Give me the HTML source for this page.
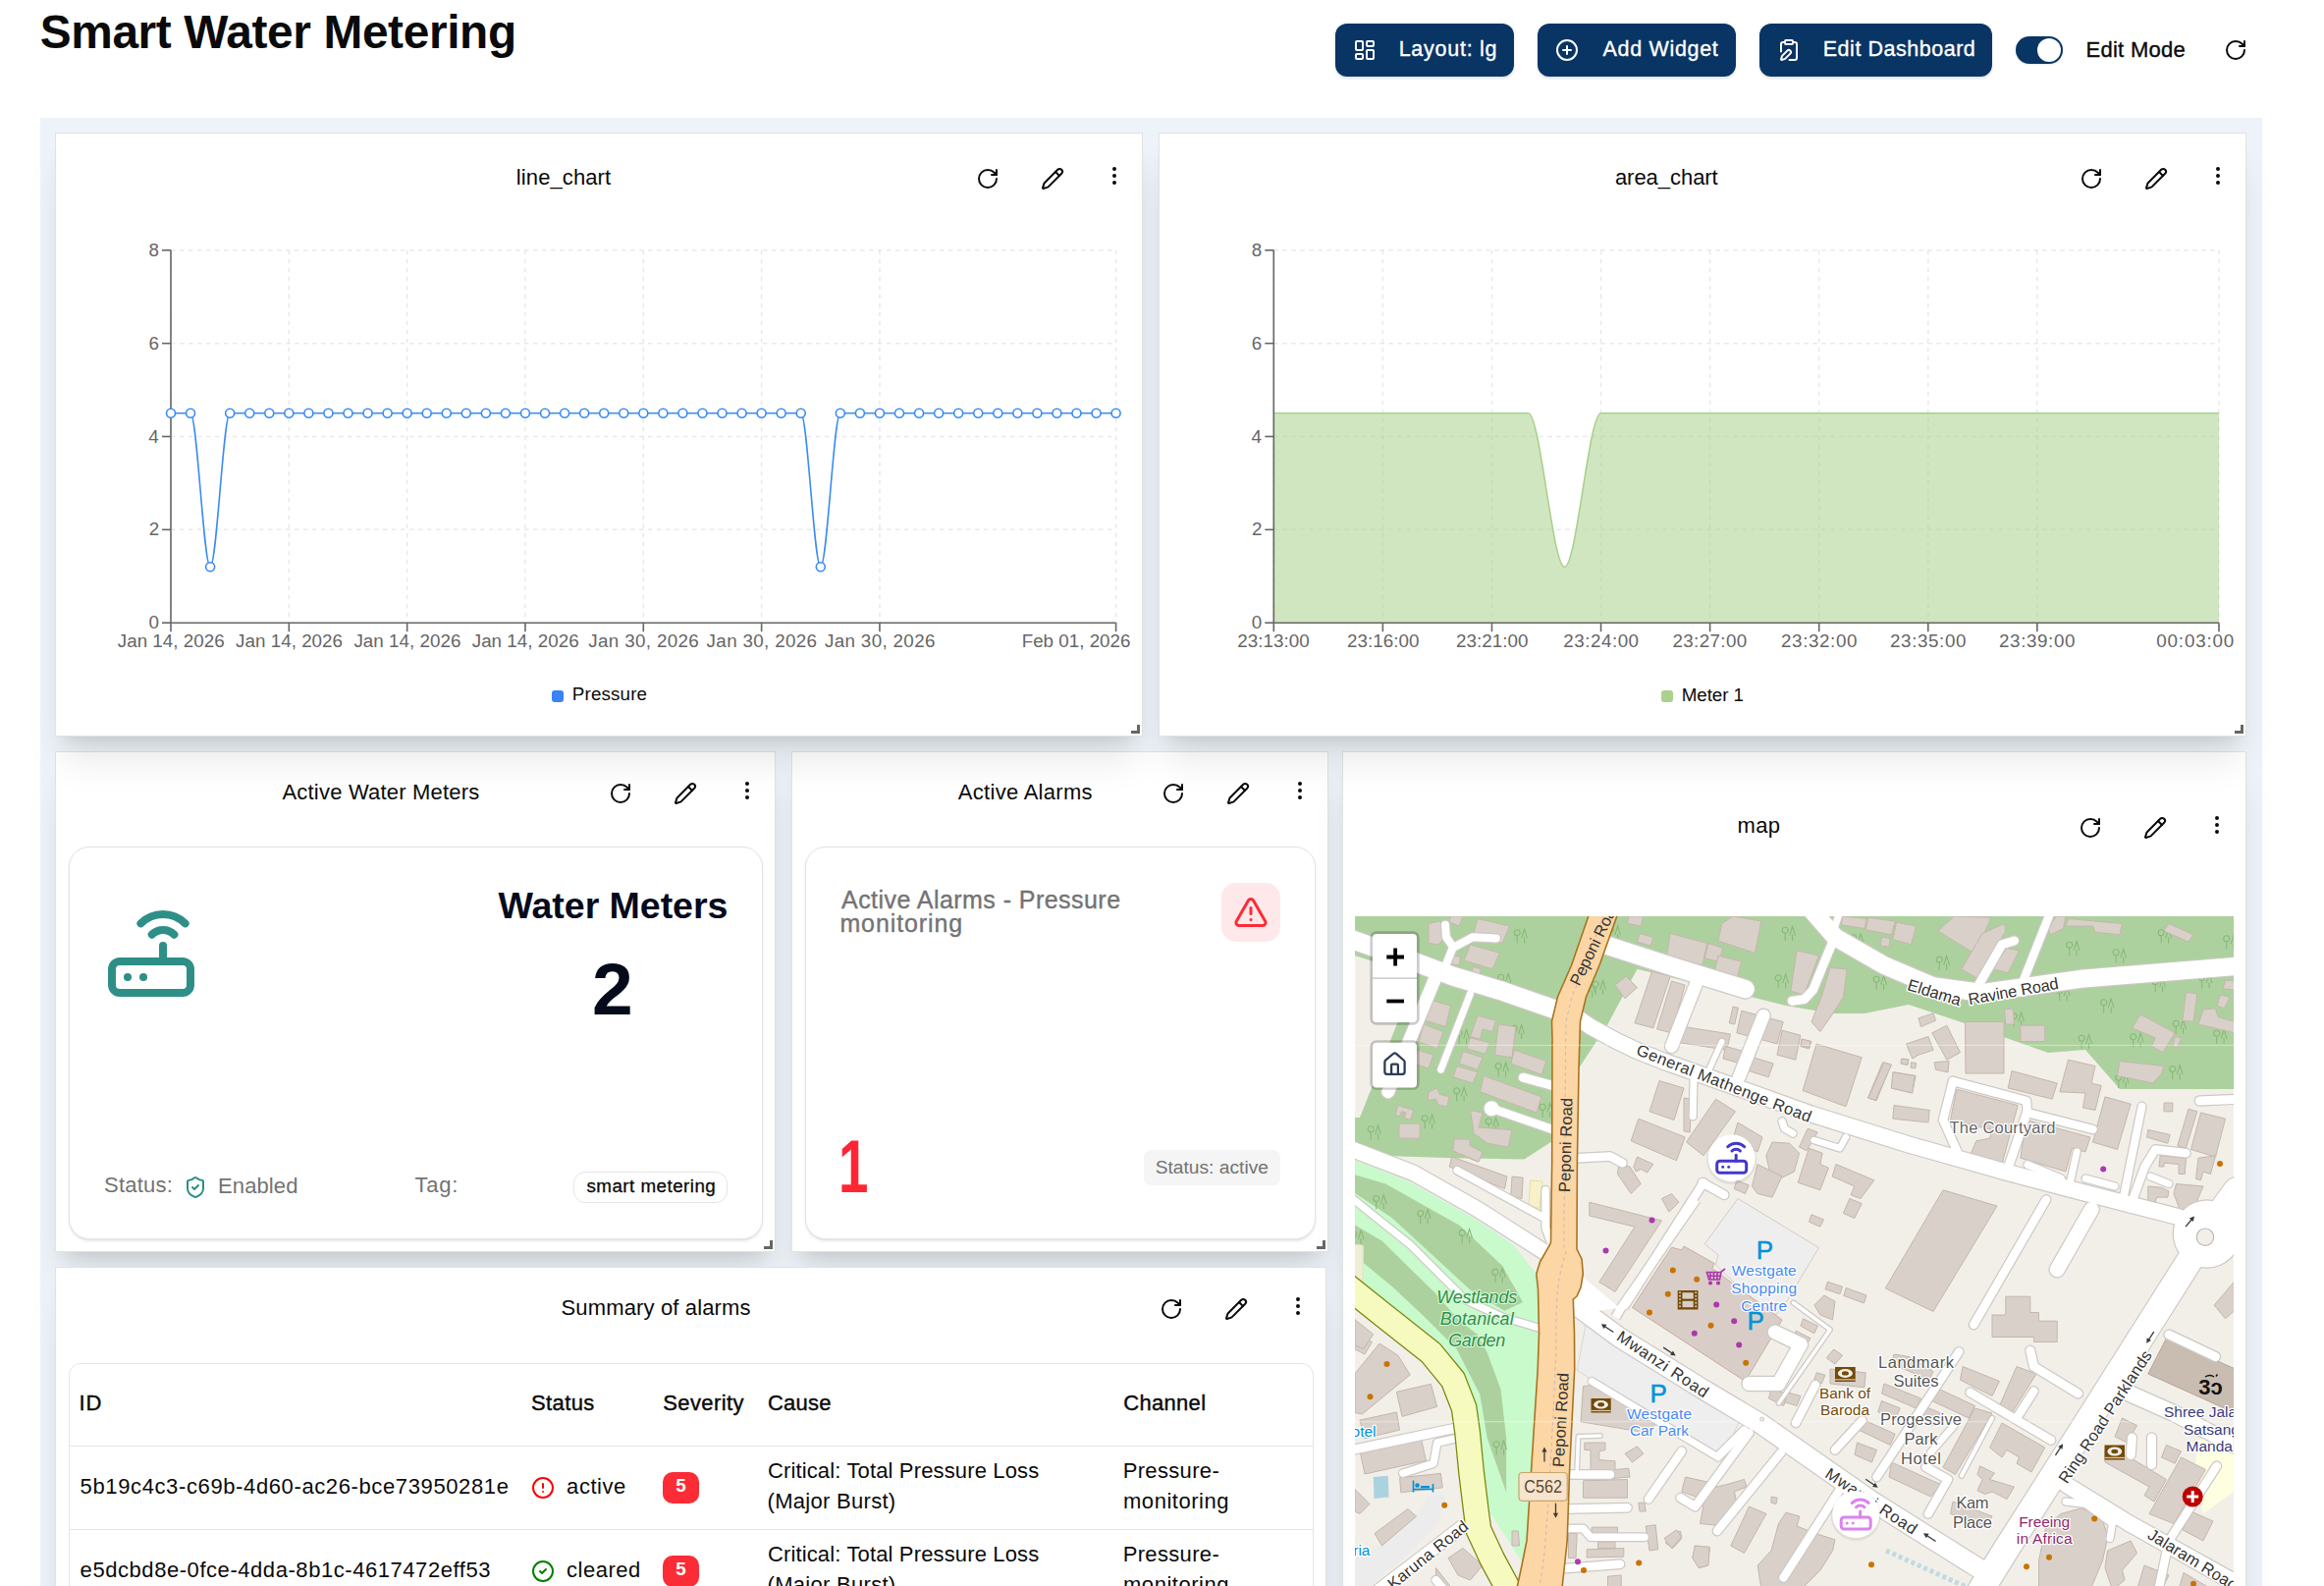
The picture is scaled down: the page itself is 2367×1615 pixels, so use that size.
<!DOCTYPE html>
<html lang="en"><head><meta charset="utf-8"><meta name="domain" content="Computer-Use"><title>Smart Water Metering</title>
<style>
html,body{margin:0;padding:0;background:#fff}
body{width:2367px;height:1615px;overflow:hidden;position:relative;font-family:"Liberation Sans", sans-serif;-webkit-font-smoothing:antialiased}
#root{position:absolute;left:0;top:0;width:2367px;height:1615px;overflow:hidden}
</style></head><body><div id="root">
<span style="position:absolute;left:40.72px;top:9.43px;font-size:47.8px;font-weight:700;font-style:normal;color:#0a0a0a;letter-spacing:-0.361px;white-space:pre;line-height:1;">Smart Water Metering</span>
<div style="position:absolute;left:1360.10px;top:24.00px;width:181.80px;height:54.00px;background:#093564;border-radius:12px;box-shadow:0 1.5px 3px rgba(0,0,0,.12)"></div>
<svg style="position:absolute;left:1378.00px;top:39.30px" width="24" height="24" viewBox="0 0 24 24" fill="none" stroke="#fff" stroke-width="2" stroke-linecap="round" stroke-linejoin="round"><rect width="7" height="9" x="3" y="3" rx="1"/><rect width="7" height="5" x="14" y="3" rx="1"/><rect width="7" height="9" x="14" y="12" rx="1"/><rect width="7" height="5" x="3" y="16" rx="1"/></svg>
<span style="position:absolute;left:1424.65px;top:40.40px;font-size:21.5px;font-weight:400;font-style:normal;color:#fff;letter-spacing:0.742px;white-space:pre;line-height:1;-webkit-text-stroke:0.35px #fff;">Layout: lg</span>
<div style="position:absolute;left:1566.20px;top:24.00px;width:201.60px;height:54.00px;background:#093564;border-radius:12px;box-shadow:0 1.5px 3px rgba(0,0,0,.12)"></div>
<svg style="position:absolute;left:1584.00px;top:39.30px" width="24" height="24" viewBox="0 0 24 24" fill="none" stroke="#fff" stroke-width="2" stroke-linecap="round" stroke-linejoin="round"><circle cx="12" cy="12" r="10"/><path d="M8 12h8"/><path d="M12 8v8"/></svg>
<span style="position:absolute;left:1632.50px;top:40.40px;font-size:21.5px;font-weight:400;font-style:normal;color:#fff;letter-spacing:0.689px;white-space:pre;line-height:1;-webkit-text-stroke:0.35px #fff;">Add Widget</span>
<div style="position:absolute;left:1792.10px;top:24.00px;width:236.70px;height:54.00px;background:#093564;border-radius:12px;box-shadow:0 1.5px 3px rgba(0,0,0,.12)"></div>
<svg style="position:absolute;left:1809.60px;top:39.30px" width="24" height="24" viewBox="0 0 24 24" fill="none" stroke="#fff" stroke-width="2" stroke-linecap="round" stroke-linejoin="round"><rect width="8" height="4" x="8" y="2" rx="1"/><path d="M16 4h2a2 2 0 0 1 2 2v14a2 2 0 0 1-2 2h-5.5"/><path d="M4 13.5V6a2 2 0 0 1 2-2h2"/><path d="M13.378 15.626a1 1 0 1 0-3.004-3.004l-5.01 5.012a2 2 0 0 0-.506.854l-.837 2.87a.5.5 0 0 0 .62.62l2.87-.837a2 2 0 0 0 .854-.506z"/></svg>
<span style="position:absolute;left:1856.75px;top:40.40px;font-size:21.5px;font-weight:400;font-style:normal;color:#fff;letter-spacing:0.529px;white-space:pre;line-height:1;-webkit-text-stroke:0.35px #fff;">Edit Dashboard</span>
<div style="position:absolute;left:2053.00px;top:37.20px;width:48.20px;height:27.60px;background:#093564;border-radius:14px;box-shadow:0 1px 2px rgba(0,0,0,.1)"></div>
<div style="position:absolute;left:2074.70px;top:38.60px;width:24.80px;height:24.80px;background:#fff;border-radius:50%"></div>
<span style="position:absolute;left:2124.45px;top:40.07px;font-size:22px;font-weight:400;font-style:normal;color:#0a0a0a;letter-spacing:0.291px;white-space:pre;line-height:1;-webkit-text-stroke:0.35px #0a0a0a;">Edit Mode</span>
<svg style="position:absolute;left:2265.00px;top:38.70px" width="24" height="24" viewBox="0 0 24 24" fill="none" stroke="#0a0a0a" stroke-width="2" stroke-linecap="round" stroke-linejoin="round"><path d="M21 12a9 9 0 1 1-9-9c2.52 0 4.93 1 6.74 2.74L21 8"/><path d="M21 3v5h-5"/></svg>
<div style="position:absolute;left:41.00px;top:120.00px;width:2263.00px;height:1600.00px;background:#edf3f8"></div>
<div style="position:absolute;left:56.00px;top:765.00px;width:734.40px;height:510.00px;background:#fff;border:1px solid #e2e2e2;box-sizing:border-box;box-shadow:0 30px 37.5px -7.5px rgba(0,0,0,.1),0 12px 15px -9px rgba(0,0,0,.1);"></div>
<div style="position:absolute;left:806.40px;top:765.00px;width:547.00px;height:510.00px;background:#fff;border:1px solid #e2e2e2;box-sizing:border-box;box-shadow:0 30px 37.5px -7.5px rgba(0,0,0,.1),0 12px 15px -9px rgba(0,0,0,.1);"></div>
<div style="position:absolute;left:1367.40px;top:765.00px;width:920.20px;height:935.00px;background:#fff;border:1px solid #e2e2e2;box-sizing:border-box;box-shadow:0 30px 37.5px -7.5px rgba(0,0,0,.1),0 12px 15px -9px rgba(0,0,0,.1);"></div>
<div style="position:absolute;left:56.00px;top:1290.40px;width:1295.40px;height:409.60px;background:#fff;border:1px solid #e2e2e2;box-sizing:border-box;box-shadow:0 30px 37.5px -7.5px rgba(0,0,0,.1),0 12px 15px -9px rgba(0,0,0,.1);"></div>
<div style="position:absolute;left:56.00px;top:135.00px;width:1108.40px;height:615.00px;background:#fff;border:1px solid #e2e2e2;box-sizing:border-box;box-shadow:0 30px 37.5px -7.5px rgba(0,0,0,.1),0 12px 15px -9px rgba(0,0,0,.1);"></div>
<div style="position:absolute;left:1180.00px;top:135.00px;width:1108.00px;height:615.00px;background:#fff;border:1px solid #e2e2e2;box-sizing:border-box;box-shadow:0 30px 37.5px -7.5px rgba(0,0,0,.1),0 12px 15px -9px rgba(0,0,0,.1);"></div>
<span style="position:absolute;left:525.80px;top:170.07px;font-size:22px;font-weight:400;font-style:normal;color:#0a0a0a;letter-spacing:0.106px;white-space:pre;line-height:1;">line_chart</span>
<svg style="position:absolute;left:994.10px;top:170.00px" width="24" height="24" viewBox="0 0 24 24" fill="none" stroke="#0a0a0a" stroke-width="2" stroke-linecap="round" stroke-linejoin="round"><path d="M21 12a9 9 0 1 1-9-9c2.52 0 4.93 1 6.74 2.74L21 8"/><path d="M21 3v5h-5"/></svg>
<svg style="position:absolute;left:1060.20px;top:170.00px" width="24" height="24" viewBox="0 0 24 24" fill="none" stroke="#0a0a0a" stroke-width="2" stroke-linecap="round" stroke-linejoin="round"><path d="M21.174 6.812a1 1 0 0 0-3.986-3.987L3.842 16.174a2 2 0 0 0-.5.83l-1.321 4.352a.5.5 0 0 0 .623.622l4.353-1.32a2 2 0 0 0 .83-.497z"/><path d="m15 5 4 4"/></svg>
<svg style="position:absolute;left:1123.10px;top:167.30px" width="24" height="24" viewBox="0 0 24 24" fill="none" stroke="#0a0a0a" stroke-width="2" stroke-linecap="round" stroke-linejoin="round"><circle cx="12" cy="12" r="1"/><circle cx="12" cy="5" r="1"/><circle cx="12" cy="19" r="1"/></svg>
<span style="position:absolute;left:1644.92px;top:170.07px;font-size:22px;font-weight:400;font-style:normal;color:#0a0a0a;letter-spacing:-0.039px;white-space:pre;line-height:1;">area_chart</span>
<svg style="position:absolute;left:2117.70px;top:170.00px" width="24" height="24" viewBox="0 0 24 24" fill="none" stroke="#0a0a0a" stroke-width="2" stroke-linecap="round" stroke-linejoin="round"><path d="M21 12a9 9 0 1 1-9-9c2.52 0 4.93 1 6.74 2.74L21 8"/><path d="M21 3v5h-5"/></svg>
<svg style="position:absolute;left:2183.80px;top:170.00px" width="24" height="24" viewBox="0 0 24 24" fill="none" stroke="#0a0a0a" stroke-width="2" stroke-linecap="round" stroke-linejoin="round"><path d="M21.174 6.812a1 1 0 0 0-3.986-3.987L3.842 16.174a2 2 0 0 0-.5.83l-1.321 4.352a.5.5 0 0 0 .623.622l4.353-1.32a2 2 0 0 0 .83-.497z"/><path d="m15 5 4 4"/></svg>
<svg style="position:absolute;left:2246.70px;top:167.30px" width="24" height="24" viewBox="0 0 24 24" fill="none" stroke="#0a0a0a" stroke-width="2" stroke-linecap="round" stroke-linejoin="round"><circle cx="12" cy="12" r="1"/><circle cx="12" cy="5" r="1"/><circle cx="12" cy="19" r="1"/></svg>
<span style="position:absolute;left:287.50px;top:796.27px;font-size:22px;font-weight:400;font-style:normal;color:#0a0a0a;letter-spacing:0.194px;white-space:pre;line-height:1;">Active Water Meters</span>
<svg style="position:absolute;left:620.10px;top:795.60px" width="24" height="24" viewBox="0 0 24 24" fill="none" stroke="#0a0a0a" stroke-width="2" stroke-linecap="round" stroke-linejoin="round"><path d="M21 12a9 9 0 1 1-9-9c2.52 0 4.93 1 6.74 2.74L21 8"/><path d="M21 3v5h-5"/></svg>
<svg style="position:absolute;left:686.20px;top:795.60px" width="24" height="24" viewBox="0 0 24 24" fill="none" stroke="#0a0a0a" stroke-width="2" stroke-linecap="round" stroke-linejoin="round"><path d="M21.174 6.812a1 1 0 0 0-3.986-3.987L3.842 16.174a2 2 0 0 0-.5.83l-1.321 4.352a.5.5 0 0 0 .623.622l4.353-1.32a2 2 0 0 0 .83-.497z"/><path d="m15 5 4 4"/></svg>
<svg style="position:absolute;left:749.10px;top:792.90px" width="24" height="24" viewBox="0 0 24 24" fill="none" stroke="#0a0a0a" stroke-width="2" stroke-linecap="round" stroke-linejoin="round"><circle cx="12" cy="12" r="1"/><circle cx="12" cy="5" r="1"/><circle cx="12" cy="19" r="1"/></svg>
<span style="position:absolute;left:975.80px;top:796.27px;font-size:22px;font-weight:400;font-style:normal;color:#0a0a0a;letter-spacing:0.292px;white-space:pre;line-height:1;">Active Alarms</span>
<svg style="position:absolute;left:1183.10px;top:795.60px" width="24" height="24" viewBox="0 0 24 24" fill="none" stroke="#0a0a0a" stroke-width="2" stroke-linecap="round" stroke-linejoin="round"><path d="M21 12a9 9 0 1 1-9-9c2.52 0 4.93 1 6.74 2.74L21 8"/><path d="M21 3v5h-5"/></svg>
<svg style="position:absolute;left:1249.20px;top:795.60px" width="24" height="24" viewBox="0 0 24 24" fill="none" stroke="#0a0a0a" stroke-width="2" stroke-linecap="round" stroke-linejoin="round"><path d="M21.174 6.812a1 1 0 0 0-3.986-3.987L3.842 16.174a2 2 0 0 0-.5.83l-1.321 4.352a.5.5 0 0 0 .623.622l4.353-1.32a2 2 0 0 0 .83-.497z"/><path d="m15 5 4 4"/></svg>
<svg style="position:absolute;left:1312.10px;top:792.90px" width="24" height="24" viewBox="0 0 24 24" fill="none" stroke="#0a0a0a" stroke-width="2" stroke-linecap="round" stroke-linejoin="round"><circle cx="12" cy="12" r="1"/><circle cx="12" cy="5" r="1"/><circle cx="12" cy="19" r="1"/></svg>
<span style="position:absolute;left:1769.42px;top:829.97px;font-size:22px;font-weight:400;font-style:normal;color:#0a0a0a;letter-spacing:0.438px;white-space:pre;line-height:1;">map</span>
<svg style="position:absolute;left:2117.30px;top:830.50px" width="24" height="24" viewBox="0 0 24 24" fill="none" stroke="#0a0a0a" stroke-width="2" stroke-linecap="round" stroke-linejoin="round"><path d="M21 12a9 9 0 1 1-9-9c2.52 0 4.93 1 6.74 2.74L21 8"/><path d="M21 3v5h-5"/></svg>
<svg style="position:absolute;left:2183.40px;top:830.50px" width="24" height="24" viewBox="0 0 24 24" fill="none" stroke="#0a0a0a" stroke-width="2" stroke-linecap="round" stroke-linejoin="round"><path d="M21.174 6.812a1 1 0 0 0-3.986-3.987L3.842 16.174a2 2 0 0 0-.5.83l-1.321 4.352a.5.5 0 0 0 .623.622l4.353-1.32a2 2 0 0 0 .83-.497z"/><path d="m15 5 4 4"/></svg>
<svg style="position:absolute;left:2246.30px;top:827.80px" width="24" height="24" viewBox="0 0 24 24" fill="none" stroke="#0a0a0a" stroke-width="2" stroke-linecap="round" stroke-linejoin="round"><circle cx="12" cy="12" r="1"/><circle cx="12" cy="5" r="1"/><circle cx="12" cy="19" r="1"/></svg>
<span style="position:absolute;left:571.50px;top:1321.27px;font-size:22px;font-weight:400;font-style:normal;color:#0a0a0a;letter-spacing:0.144px;white-space:pre;line-height:1;">Summary of alarms</span>
<svg style="position:absolute;left:1181.10px;top:1320.80px" width="24" height="24" viewBox="0 0 24 24" fill="none" stroke="#0a0a0a" stroke-width="2" stroke-linecap="round" stroke-linejoin="round"><path d="M21 12a9 9 0 1 1-9-9c2.52 0 4.93 1 6.74 2.74L21 8"/><path d="M21 3v5h-5"/></svg>
<svg style="position:absolute;left:1247.20px;top:1320.80px" width="24" height="24" viewBox="0 0 24 24" fill="none" stroke="#0a0a0a" stroke-width="2" stroke-linecap="round" stroke-linejoin="round"><path d="M21.174 6.812a1 1 0 0 0-3.986-3.987L3.842 16.174a2 2 0 0 0-.5.83l-1.321 4.352a.5.5 0 0 0 .623.622l4.353-1.32a2 2 0 0 0 .83-.497z"/><path d="m15 5 4 4"/></svg>
<svg style="position:absolute;left:1310.10px;top:1318.10px" width="24" height="24" viewBox="0 0 24 24" fill="none" stroke="#0a0a0a" stroke-width="2" stroke-linecap="round" stroke-linejoin="round"><circle cx="12" cy="12" r="1"/><circle cx="12" cy="5" r="1"/><circle cx="12" cy="19" r="1"/></svg>
<div style="position:absolute;left:1152.20px;top:737.80px;width:6.00px;height:6.00px;border-right:3px solid #666;border-bottom:3px solid #666"></div>
<div style="position:absolute;left:2275.80px;top:737.80px;width:6.00px;height:6.00px;border-right:3px solid #666;border-bottom:3px solid #666"></div>
<div style="position:absolute;left:778.20px;top:1262.80px;width:6.00px;height:6.00px;border-right:3px solid #666;border-bottom:3px solid #666"></div>
<div style="position:absolute;left:1341.20px;top:1262.80px;width:6.00px;height:6.00px;border-right:3px solid #666;border-bottom:3px solid #666"></div>
<svg style="position:absolute;left:0;top:0" width="2367" height="800" viewBox="0 0 2367 800" fill="none"><line x1="174.00" y1="539.35" x2="1136.60" y2="539.35" stroke="#e9e9e9" stroke-width="1.5" stroke-dasharray="4.5 4.5"/><line x1="174.00" y1="444.50" x2="1136.60" y2="444.50" stroke="#e9e9e9" stroke-width="1.5" stroke-dasharray="4.5 4.5"/><line x1="174.00" y1="349.65" x2="1136.60" y2="349.65" stroke="#e9e9e9" stroke-width="1.5" stroke-dasharray="4.5 4.5"/><line x1="174.00" y1="254.80" x2="1136.60" y2="254.80" stroke="#e9e9e9" stroke-width="1.5" stroke-dasharray="4.5 4.5"/><line x1="174.00" y1="254.80" x2="174.00" y2="634.20" stroke="#e9e9e9" stroke-width="1.5" stroke-dasharray="4.5 4.5"/><line x1="294.32" y1="254.80" x2="294.32" y2="634.20" stroke="#e9e9e9" stroke-width="1.5" stroke-dasharray="4.5 4.5"/><line x1="414.65" y1="254.80" x2="414.65" y2="634.20" stroke="#e9e9e9" stroke-width="1.5" stroke-dasharray="4.5 4.5"/><line x1="534.97" y1="254.80" x2="534.97" y2="634.20" stroke="#e9e9e9" stroke-width="1.5" stroke-dasharray="4.5 4.5"/><line x1="655.30" y1="254.80" x2="655.30" y2="634.20" stroke="#e9e9e9" stroke-width="1.5" stroke-dasharray="4.5 4.5"/><line x1="775.62" y1="254.80" x2="775.62" y2="634.20" stroke="#e9e9e9" stroke-width="1.5" stroke-dasharray="4.5 4.5"/><line x1="895.95" y1="254.80" x2="895.95" y2="634.20" stroke="#e9e9e9" stroke-width="1.5" stroke-dasharray="4.5 4.5"/><line x1="1136.60" y1="254.80" x2="1136.60" y2="634.20" stroke="#e9e9e9" stroke-width="1.5" stroke-dasharray="4.5 4.5"/><line x1="174.00" y1="254.80" x2="174.00" y2="634.20" stroke="#666" stroke-width="1.6"/><line x1="174.00" y1="634.20" x2="1136.60" y2="634.20" stroke="#666" stroke-width="1.6"/><line x1="165.00" y1="634.20" x2="174.00" y2="634.20" stroke="#666" stroke-width="1.6"/><line x1="165.00" y1="539.35" x2="174.00" y2="539.35" stroke="#666" stroke-width="1.6"/><line x1="165.00" y1="444.50" x2="174.00" y2="444.50" stroke="#666" stroke-width="1.6"/><line x1="165.00" y1="349.65" x2="174.00" y2="349.65" stroke="#666" stroke-width="1.6"/><line x1="165.00" y1="254.80" x2="174.00" y2="254.80" stroke="#666" stroke-width="1.6"/><line x1="174.00" y1="634.20" x2="174.00" y2="643.20" stroke="#666" stroke-width="1.6"/><line x1="294.32" y1="634.20" x2="294.32" y2="643.20" stroke="#666" stroke-width="1.6"/><line x1="414.65" y1="634.20" x2="414.65" y2="643.20" stroke="#666" stroke-width="1.6"/><line x1="534.97" y1="634.20" x2="534.97" y2="643.20" stroke="#666" stroke-width="1.6"/><line x1="655.30" y1="634.20" x2="655.30" y2="643.20" stroke="#666" stroke-width="1.6"/><line x1="775.62" y1="634.20" x2="775.62" y2="643.20" stroke="#666" stroke-width="1.6"/><line x1="895.95" y1="634.20" x2="895.95" y2="643.20" stroke="#666" stroke-width="1.6"/><line x1="1136.60" y1="634.20" x2="1136.60" y2="643.20" stroke="#666" stroke-width="1.6"/><path d="M174.00,420.79L194.05,420.79C200.74,420.79 207.42,577.29 214.11,577.29C220.79,577.29 227.48,420.79 234.16,420.79L254.22,420.79L274.27,420.79L294.32,420.79L314.38,420.79L334.43,420.79L354.49,420.79L374.54,420.79L394.60,420.79L414.65,420.79L434.70,420.79L454.76,420.79L474.81,420.79L494.87,420.79L514.92,420.79L534.97,420.79L555.03,420.79L575.08,420.79L595.14,420.79L615.19,420.79L635.25,420.79L655.30,420.79L675.35,420.79L695.41,420.79L715.46,420.79L735.52,420.79L755.57,420.79L775.62,420.79L795.68,420.79L815.73,420.79C822.42,420.79 829.10,577.29 835.79,577.29C842.47,577.29 849.16,420.79 855.84,420.79L875.90,420.79L895.95,420.79L916.00,420.79L936.06,420.79L956.11,420.79L976.17,420.79L996.22,420.79L1016.27,420.79L1036.33,420.79L1056.38,420.79L1076.44,420.79L1096.49,420.79L1116.55,420.79L1136.60,420.79" stroke="#3b8bf2" stroke-width="1.6"/><circle cx="174.00" cy="420.79" r="4.5" fill="#fff" stroke="#3b8bf2" stroke-width="1.6"/><circle cx="194.05" cy="420.79" r="4.5" fill="#fff" stroke="#3b8bf2" stroke-width="1.6"/><circle cx="214.11" cy="577.29" r="4.5" fill="#fff" stroke="#3b8bf2" stroke-width="1.6"/><circle cx="234.16" cy="420.79" r="4.5" fill="#fff" stroke="#3b8bf2" stroke-width="1.6"/><circle cx="254.22" cy="420.79" r="4.5" fill="#fff" stroke="#3b8bf2" stroke-width="1.6"/><circle cx="274.27" cy="420.79" r="4.5" fill="#fff" stroke="#3b8bf2" stroke-width="1.6"/><circle cx="294.32" cy="420.79" r="4.5" fill="#fff" stroke="#3b8bf2" stroke-width="1.6"/><circle cx="314.38" cy="420.79" r="4.5" fill="#fff" stroke="#3b8bf2" stroke-width="1.6"/><circle cx="334.43" cy="420.79" r="4.5" fill="#fff" stroke="#3b8bf2" stroke-width="1.6"/><circle cx="354.49" cy="420.79" r="4.5" fill="#fff" stroke="#3b8bf2" stroke-width="1.6"/><circle cx="374.54" cy="420.79" r="4.5" fill="#fff" stroke="#3b8bf2" stroke-width="1.6"/><circle cx="394.60" cy="420.79" r="4.5" fill="#fff" stroke="#3b8bf2" stroke-width="1.6"/><circle cx="414.65" cy="420.79" r="4.5" fill="#fff" stroke="#3b8bf2" stroke-width="1.6"/><circle cx="434.70" cy="420.79" r="4.5" fill="#fff" stroke="#3b8bf2" stroke-width="1.6"/><circle cx="454.76" cy="420.79" r="4.5" fill="#fff" stroke="#3b8bf2" stroke-width="1.6"/><circle cx="474.81" cy="420.79" r="4.5" fill="#fff" stroke="#3b8bf2" stroke-width="1.6"/><circle cx="494.87" cy="420.79" r="4.5" fill="#fff" stroke="#3b8bf2" stroke-width="1.6"/><circle cx="514.92" cy="420.79" r="4.5" fill="#fff" stroke="#3b8bf2" stroke-width="1.6"/><circle cx="534.97" cy="420.79" r="4.5" fill="#fff" stroke="#3b8bf2" stroke-width="1.6"/><circle cx="555.03" cy="420.79" r="4.5" fill="#fff" stroke="#3b8bf2" stroke-width="1.6"/><circle cx="575.08" cy="420.79" r="4.5" fill="#fff" stroke="#3b8bf2" stroke-width="1.6"/><circle cx="595.14" cy="420.79" r="4.5" fill="#fff" stroke="#3b8bf2" stroke-width="1.6"/><circle cx="615.19" cy="420.79" r="4.5" fill="#fff" stroke="#3b8bf2" stroke-width="1.6"/><circle cx="635.25" cy="420.79" r="4.5" fill="#fff" stroke="#3b8bf2" stroke-width="1.6"/><circle cx="655.30" cy="420.79" r="4.5" fill="#fff" stroke="#3b8bf2" stroke-width="1.6"/><circle cx="675.35" cy="420.79" r="4.5" fill="#fff" stroke="#3b8bf2" stroke-width="1.6"/><circle cx="695.41" cy="420.79" r="4.5" fill="#fff" stroke="#3b8bf2" stroke-width="1.6"/><circle cx="715.46" cy="420.79" r="4.5" fill="#fff" stroke="#3b8bf2" stroke-width="1.6"/><circle cx="735.52" cy="420.79" r="4.5" fill="#fff" stroke="#3b8bf2" stroke-width="1.6"/><circle cx="755.57" cy="420.79" r="4.5" fill="#fff" stroke="#3b8bf2" stroke-width="1.6"/><circle cx="775.62" cy="420.79" r="4.5" fill="#fff" stroke="#3b8bf2" stroke-width="1.6"/><circle cx="795.68" cy="420.79" r="4.5" fill="#fff" stroke="#3b8bf2" stroke-width="1.6"/><circle cx="815.73" cy="420.79" r="4.5" fill="#fff" stroke="#3b8bf2" stroke-width="1.6"/><circle cx="835.79" cy="577.29" r="4.5" fill="#fff" stroke="#3b8bf2" stroke-width="1.6"/><circle cx="855.84" cy="420.79" r="4.5" fill="#fff" stroke="#3b8bf2" stroke-width="1.6"/><circle cx="875.90" cy="420.79" r="4.5" fill="#fff" stroke="#3b8bf2" stroke-width="1.6"/><circle cx="895.95" cy="420.79" r="4.5" fill="#fff" stroke="#3b8bf2" stroke-width="1.6"/><circle cx="916.00" cy="420.79" r="4.5" fill="#fff" stroke="#3b8bf2" stroke-width="1.6"/><circle cx="936.06" cy="420.79" r="4.5" fill="#fff" stroke="#3b8bf2" stroke-width="1.6"/><circle cx="956.11" cy="420.79" r="4.5" fill="#fff" stroke="#3b8bf2" stroke-width="1.6"/><circle cx="976.17" cy="420.79" r="4.5" fill="#fff" stroke="#3b8bf2" stroke-width="1.6"/><circle cx="996.22" cy="420.79" r="4.5" fill="#fff" stroke="#3b8bf2" stroke-width="1.6"/><circle cx="1016.27" cy="420.79" r="4.5" fill="#fff" stroke="#3b8bf2" stroke-width="1.6"/><circle cx="1036.33" cy="420.79" r="4.5" fill="#fff" stroke="#3b8bf2" stroke-width="1.6"/><circle cx="1056.38" cy="420.79" r="4.5" fill="#fff" stroke="#3b8bf2" stroke-width="1.6"/><circle cx="1076.44" cy="420.79" r="4.5" fill="#fff" stroke="#3b8bf2" stroke-width="1.6"/><circle cx="1096.49" cy="420.79" r="4.5" fill="#fff" stroke="#3b8bf2" stroke-width="1.6"/><circle cx="1116.55" cy="420.79" r="4.5" fill="#fff" stroke="#3b8bf2" stroke-width="1.6"/><circle cx="1136.60" cy="420.79" r="4.5" fill="#fff" stroke="#3b8bf2" stroke-width="1.6"/><line x1="1297.30" y1="539.35" x2="2260.00" y2="539.35" stroke="#e9e9e9" stroke-width="1.5" stroke-dasharray="4.5 4.5"/><line x1="1297.30" y1="444.50" x2="2260.00" y2="444.50" stroke="#e9e9e9" stroke-width="1.5" stroke-dasharray="4.5 4.5"/><line x1="1297.30" y1="349.65" x2="2260.00" y2="349.65" stroke="#e9e9e9" stroke-width="1.5" stroke-dasharray="4.5 4.5"/><line x1="1297.30" y1="254.80" x2="2260.00" y2="254.80" stroke="#e9e9e9" stroke-width="1.5" stroke-dasharray="4.5 4.5"/><line x1="1297.30" y1="254.80" x2="1297.30" y2="634.20" stroke="#e9e9e9" stroke-width="1.5" stroke-dasharray="4.5 4.5"/><line x1="1408.38" y1="254.80" x2="1408.38" y2="634.20" stroke="#e9e9e9" stroke-width="1.5" stroke-dasharray="4.5 4.5"/><line x1="1519.46" y1="254.80" x2="1519.46" y2="634.20" stroke="#e9e9e9" stroke-width="1.5" stroke-dasharray="4.5 4.5"/><line x1="1630.54" y1="254.80" x2="1630.54" y2="634.20" stroke="#e9e9e9" stroke-width="1.5" stroke-dasharray="4.5 4.5"/><line x1="1741.62" y1="254.80" x2="1741.62" y2="634.20" stroke="#e9e9e9" stroke-width="1.5" stroke-dasharray="4.5 4.5"/><line x1="1852.70" y1="254.80" x2="1852.70" y2="634.20" stroke="#e9e9e9" stroke-width="1.5" stroke-dasharray="4.5 4.5"/><line x1="1963.78" y1="254.80" x2="1963.78" y2="634.20" stroke="#e9e9e9" stroke-width="1.5" stroke-dasharray="4.5 4.5"/><line x1="2074.87" y1="254.80" x2="2074.87" y2="634.20" stroke="#e9e9e9" stroke-width="1.5" stroke-dasharray="4.5 4.5"/><line x1="2260.00" y1="254.80" x2="2260.00" y2="634.20" stroke="#e9e9e9" stroke-width="1.5" stroke-dasharray="4.5 4.5"/><path d="M1297.30,420.79L1334.33,420.79L1371.35,420.79L1408.38,420.79L1445.41,420.79L1482.43,420.79L1519.46,420.79L1556.49,420.79C1568.83,420.79 1581.17,577.29 1593.52,577.29C1605.86,577.29 1618.20,420.79 1630.54,420.79L1667.57,420.79L1704.60,420.79L1741.62,420.79L1778.65,420.79L1815.68,420.79L1852.70,420.79L1889.73,420.79L1926.76,420.79L1963.78,420.79L2000.81,420.79L2037.84,420.79L2074.87,420.79L2111.89,420.79L2148.92,420.79L2185.95,420.79L2222.97,420.79L2260.00,420.79L2260.00,634.20L1297.30,634.20Z" fill="#a9d18e" fill-opacity="0.55"/><path d="M1297.30,420.79L1334.33,420.79L1371.35,420.79L1408.38,420.79L1445.41,420.79L1482.43,420.79L1519.46,420.79L1556.49,420.79C1568.83,420.79 1581.17,577.29 1593.52,577.29C1605.86,577.29 1618.20,420.79 1630.54,420.79L1667.57,420.79L1704.60,420.79L1741.62,420.79L1778.65,420.79L1815.68,420.79L1852.70,420.79L1889.73,420.79L1926.76,420.79L1963.78,420.79L2000.81,420.79L2037.84,420.79L2074.87,420.79L2111.89,420.79L2148.92,420.79L2185.95,420.79L2222.97,420.79L2260.00,420.79" stroke="#a9d18e" stroke-width="1.6"/><line x1="1297.30" y1="254.80" x2="1297.30" y2="634.20" stroke="#666" stroke-width="1.6"/><line x1="1297.30" y1="634.20" x2="2260.00" y2="634.20" stroke="#666" stroke-width="1.6"/><line x1="1288.30" y1="634.20" x2="1297.30" y2="634.20" stroke="#666" stroke-width="1.6"/><line x1="1288.30" y1="539.35" x2="1297.30" y2="539.35" stroke="#666" stroke-width="1.6"/><line x1="1288.30" y1="444.50" x2="1297.30" y2="444.50" stroke="#666" stroke-width="1.6"/><line x1="1288.30" y1="349.65" x2="1297.30" y2="349.65" stroke="#666" stroke-width="1.6"/><line x1="1288.30" y1="254.80" x2="1297.30" y2="254.80" stroke="#666" stroke-width="1.6"/><line x1="1297.30" y1="634.20" x2="1297.30" y2="643.20" stroke="#666" stroke-width="1.6"/><line x1="1408.38" y1="634.20" x2="1408.38" y2="643.20" stroke="#666" stroke-width="1.6"/><line x1="1519.46" y1="634.20" x2="1519.46" y2="643.20" stroke="#666" stroke-width="1.6"/><line x1="1630.54" y1="634.20" x2="1630.54" y2="643.20" stroke="#666" stroke-width="1.6"/><line x1="1741.62" y1="634.20" x2="1741.62" y2="643.20" stroke="#666" stroke-width="1.6"/><line x1="1852.70" y1="634.20" x2="1852.70" y2="643.20" stroke="#666" stroke-width="1.6"/><line x1="1963.78" y1="634.20" x2="1963.78" y2="643.20" stroke="#666" stroke-width="1.6"/><line x1="2074.87" y1="634.20" x2="2074.87" y2="643.20" stroke="#666" stroke-width="1.6"/><line x1="2260.00" y1="634.20" x2="2260.00" y2="643.20" stroke="#666" stroke-width="1.6"/></svg>
<span style="position:absolute;left:151.42px;top:625.28px;font-size:18.8px;font-weight:400;font-style:normal;color:#666;letter-spacing:0.000px;white-space:pre;line-height:1;">0</span>
<span style="position:absolute;left:1274.72px;top:625.28px;font-size:18.8px;font-weight:400;font-style:normal;color:#666;letter-spacing:0.000px;white-space:pre;line-height:1;">0</span>
<span style="position:absolute;left:151.67px;top:530.43px;font-size:18.8px;font-weight:400;font-style:normal;color:#666;letter-spacing:0.000px;white-space:pre;line-height:1;">2</span>
<span style="position:absolute;left:1274.97px;top:530.43px;font-size:18.8px;font-weight:400;font-style:normal;color:#666;letter-spacing:0.000px;white-space:pre;line-height:1;">2</span>
<span style="position:absolute;left:151.30px;top:435.58px;font-size:18.8px;font-weight:400;font-style:normal;color:#666;letter-spacing:0.000px;white-space:pre;line-height:1;">4</span>
<span style="position:absolute;left:1274.60px;top:435.58px;font-size:18.8px;font-weight:400;font-style:normal;color:#666;letter-spacing:0.000px;white-space:pre;line-height:1;">4</span>
<span style="position:absolute;left:151.55px;top:340.73px;font-size:18.8px;font-weight:400;font-style:normal;color:#666;letter-spacing:0.000px;white-space:pre;line-height:1;">6</span>
<span style="position:absolute;left:1274.85px;top:340.73px;font-size:18.8px;font-weight:400;font-style:normal;color:#666;letter-spacing:0.000px;white-space:pre;line-height:1;">6</span>
<span style="position:absolute;left:151.55px;top:245.88px;font-size:18.8px;font-weight:400;font-style:normal;color:#666;letter-spacing:0.000px;white-space:pre;line-height:1;">8</span>
<span style="position:absolute;left:1274.85px;top:245.88px;font-size:18.8px;font-weight:400;font-style:normal;color:#666;letter-spacing:0.000px;white-space:pre;line-height:1;">8</span>
<span style="position:absolute;left:119.75px;top:643.58px;font-size:18.8px;font-weight:400;font-style:normal;color:#666;letter-spacing:0.031px;white-space:pre;line-height:1;">Jan 14, 2026</span>
<span style="position:absolute;left:240.07px;top:643.58px;font-size:18.8px;font-weight:400;font-style:normal;color:#666;letter-spacing:0.031px;white-space:pre;line-height:1;">Jan 14, 2026</span>
<span style="position:absolute;left:360.40px;top:643.58px;font-size:18.8px;font-weight:400;font-style:normal;color:#666;letter-spacing:0.031px;white-space:pre;line-height:1;">Jan 14, 2026</span>
<span style="position:absolute;left:480.72px;top:643.58px;font-size:18.8px;font-weight:400;font-style:normal;color:#666;letter-spacing:0.031px;white-space:pre;line-height:1;">Jan 14, 2026</span>
<span style="position:absolute;left:599.30px;top:643.58px;font-size:18.8px;font-weight:400;font-style:normal;color:#666;letter-spacing:0.349px;white-space:pre;line-height:1;">Jan 30, 2026</span>
<span style="position:absolute;left:719.62px;top:643.58px;font-size:18.8px;font-weight:400;font-style:normal;color:#666;letter-spacing:0.349px;white-space:pre;line-height:1;">Jan 30, 2026</span>
<span style="position:absolute;left:839.95px;top:643.58px;font-size:18.8px;font-weight:400;font-style:normal;color:#666;letter-spacing:0.349px;white-space:pre;line-height:1;">Jan 30, 2026</span>
<span style="position:absolute;left:1040.70px;top:643.58px;font-size:18.8px;font-weight:400;font-style:normal;color:#666;letter-spacing:0.006px;white-space:pre;line-height:1;">Feb 01, 2026</span>
<span style="position:absolute;left:1260.32px;top:643.58px;font-size:18.8px;font-weight:400;font-style:normal;color:#666;letter-spacing:0.034px;white-space:pre;line-height:1;">23:13:00</span>
<span style="position:absolute;left:1372.02px;top:643.58px;font-size:18.8px;font-weight:400;font-style:normal;color:#666;letter-spacing:0.034px;white-space:pre;line-height:1;">23:16:00</span>
<span style="position:absolute;left:1483.02px;top:643.58px;font-size:18.8px;font-weight:400;font-style:normal;color:#666;letter-spacing:0.034px;white-space:pre;line-height:1;">23:21:00</span>
<span style="position:absolute;left:1592.32px;top:643.58px;font-size:18.8px;font-weight:400;font-style:normal;color:#666;letter-spacing:0.519px;white-space:pre;line-height:1;">23:24:00</span>
<span style="position:absolute;left:1703.42px;top:643.58px;font-size:18.8px;font-weight:400;font-style:normal;color:#666;letter-spacing:0.391px;white-space:pre;line-height:1;">23:27:00</span>
<span style="position:absolute;left:1814.02px;top:643.58px;font-size:18.8px;font-weight:400;font-style:normal;color:#666;letter-spacing:0.619px;white-space:pre;line-height:1;">23:32:00</span>
<span style="position:absolute;left:1925.02px;top:643.58px;font-size:18.8px;font-weight:400;font-style:normal;color:#666;letter-spacing:0.619px;white-space:pre;line-height:1;">23:35:00</span>
<span style="position:absolute;left:2036.02px;top:643.58px;font-size:18.8px;font-weight:400;font-style:normal;color:#666;letter-spacing:0.619px;white-space:pre;line-height:1;">23:39:00</span>
<span style="position:absolute;left:2196.35px;top:643.58px;font-size:18.8px;font-weight:400;font-style:normal;color:#666;letter-spacing:0.816px;white-space:pre;line-height:1;">00:03:00</span>
<div style="position:absolute;left:562.00px;top:702.90px;width:12.00px;height:12.00px;background:#3b82f6;border-radius:3px"></div>
<span style="position:absolute;left:582.80px;top:698.48px;font-size:18.8px;font-weight:400;font-style:normal;color:#0a0a0a;letter-spacing:0.151px;white-space:pre;line-height:1;">Pressure</span>
<div style="position:absolute;left:1692.40px;top:703.00px;width:12.00px;height:12.00px;background:#abd18f;border-radius:3px"></div>
<span style="position:absolute;left:1712.80px;top:698.58px;font-size:18.8px;font-weight:400;font-style:normal;color:#0a0a0a;letter-spacing:-0.098px;white-space:pre;line-height:1;">Meter 1</span>
<div style="position:absolute;left:69.60px;top:862.40px;width:707.60px;height:399.20px;background:#fff;border:1px solid #e5e5e5;border-radius:21px;box-sizing:border-box;box-shadow:0 1.5px 3px rgba(0,0,0,.09),0 1px 2px -1px rgba(0,0,0,.08)"></div>
<svg style="position:absolute;left:106.00px;top:923.00px" width="96" height="96" viewBox="0 0 24 24" fill="none" stroke="#2e8f87" stroke-width="2" stroke-linecap="round" stroke-linejoin="round"><rect width="20" height="8" x="2" y="14" rx="2"/><path d="M6.01 18H6"/><path d="M10.01 18H10"/><path d="M15 10v4"/><path d="M17.84 7.17a4 4 0 0 0-5.66 0"/><path d="M20.66 4.34a8 8 0 0 0-11.31 0"/></svg>
<span style="position:absolute;left:507.50px;top:904.26px;font-size:37.6px;font-weight:700;font-style:normal;color:#060b1c;letter-spacing:-0.065px;white-space:pre;line-height:1;-webkit-text-stroke:0px;">Water Meters</span>
<span style="position:absolute;left:603.06px;top:969.60px;font-size:75px;font-weight:700;font-style:normal;color:#060b1c;letter-spacing:0.000px;white-space:pre;line-height:1;">2</span>
<span style="position:absolute;left:106.00px;top:1195.77px;font-size:22px;font-weight:400;font-style:normal;color:#737373;letter-spacing:0.217px;white-space:pre;line-height:1;">Status:</span>
<svg style="position:absolute;left:187.00px;top:1197.00px" width="24" height="24" viewBox="0 0 24 24" fill="none" stroke="#2e8f87" stroke-width="2" stroke-linecap="round" stroke-linejoin="round"><path d="M20 13c0 5-3.5 7.5-7.66 8.95a1 1 0 0 1-.67-.01C7.5 20.5 4 18 4 13V6a1 1 0 0 1 1-1c2 0 4.5-1.2 6.24-2.72a1.17 1.17 0 0 1 1.52 0C14.51 3.81 17 5 19 5a1 1 0 0 1 1 1z"/><path d="m9 12 2 2 4-4"/></svg>
<span style="position:absolute;left:222.05px;top:1196.97px;font-size:22px;font-weight:400;font-style:normal;color:#737373;letter-spacing:0.096px;white-space:pre;line-height:1;">Enabled</span>
<span style="position:absolute;left:422.50px;top:1195.77px;font-size:22px;font-weight:400;font-style:normal;color:#737373;letter-spacing:0.725px;white-space:pre;line-height:1;">Tag:</span>
<div style="position:absolute;left:584.20px;top:1193.00px;width:156.60px;height:31.90px;border:1px solid #e5e5e5;border-radius:12px;box-sizing:border-box;background:#fff"></div>
<span style="position:absolute;left:597.50px;top:1198.58px;font-size:18.8px;font-weight:400;font-style:normal;color:#0a0a0a;letter-spacing:0.461px;white-space:pre;line-height:1;-webkit-text-stroke:0.3px #0a0a0a;">smart metering</span>
<div style="position:absolute;left:819.80px;top:862.40px;width:520.60px;height:399.20px;background:#fff;border:1px solid #e5e5e5;border-radius:21px;box-sizing:border-box;box-shadow:0 1.5px 3px rgba(0,0,0,.09),0 1px 2px -1px rgba(0,0,0,.08)"></div>
<span style="position:absolute;left:857.00px;top:904.43px;font-size:25px;font-weight:400;font-style:normal;color:#737373;letter-spacing:0.451px;white-space:pre;line-height:1;-webkit-text-stroke:0.35px #737373;">Active Alarms - Pressure</span>
<span style="position:absolute;left:855.38px;top:928.23px;font-size:25px;font-weight:400;font-style:normal;color:#737373;letter-spacing:0.908px;white-space:pre;line-height:1;-webkit-text-stroke:0.35px #737373;">monitoring</span>
<div style="position:absolute;left:1244.20px;top:899.20px;width:59.60px;height:59.60px;background:#ffe8ea;border-radius:15px"></div>
<svg style="position:absolute;left:1256.00px;top:911.00px" width="36" height="36" viewBox="0 0 24 24" fill="none" stroke="#fb2c36" stroke-width="2" stroke-linecap="round" stroke-linejoin="round"><path d="m21.73 18-8-14a2 2 0 0 0-3.48 0l-8 14A2 2 0 0 0 4 21h16a2 2 0 0 0 1.73-3"/><path d="M12 9v4"/><path d="M12 17h.01"/></svg>
<span style="position:absolute;left:853.25px;top:1150.05px;font-size:76px;font-weight:700;font-style:normal;color:#ff2533;letter-spacing:0.000px;white-space:pre;line-height:1;transform:scaleX(0.72);transform-origin:4px 0;">1</span>
<div style="position:absolute;left:1165.00px;top:1171.20px;width:138.80px;height:35.60px;background:#f5f5f5;border-radius:7px"></div>
<span style="position:absolute;left:1176.63px;top:1178.64px;font-size:19.2px;font-weight:400;font-style:normal;color:#737373;letter-spacing:0.017px;white-space:pre;line-height:1;">Status: active</span>
<div style="position:absolute;left:69.50px;top:1387.50px;width:1268.90px;height:400.00px;border:1px solid #e5e5e5;border-radius:12px;box-sizing:border-box;background:#fff"></div>
<div style="position:absolute;left:70.00px;top:1472.00px;width:1268.00px;height:1.00px;background:#e5e5e5"></div>
<div style="position:absolute;left:70.00px;top:1557.00px;width:1268.00px;height:1.00px;background:#e5e5e5"></div>
<span style="position:absolute;left:80.50px;top:1418.27px;font-size:22px;font-weight:400;font-style:normal;color:#0a0a0a;letter-spacing:1.000px;white-space:pre;line-height:1;-webkit-text-stroke:0.4px #0a0a0a;">ID</span>
<span style="position:absolute;left:541.00px;top:1418.27px;font-size:22px;font-weight:400;font-style:normal;color:#0a0a0a;letter-spacing:0.375px;white-space:pre;line-height:1;-webkit-text-stroke:0.4px #0a0a0a;">Status</span>
<span style="position:absolute;left:675.30px;top:1418.27px;font-size:22px;font-weight:400;font-style:normal;color:#0a0a0a;letter-spacing:0.386px;white-space:pre;line-height:1;-webkit-text-stroke:0.4px #0a0a0a;">Severity</span>
<span style="position:absolute;left:781.88px;top:1418.27px;font-size:22px;font-weight:400;font-style:normal;color:#0a0a0a;letter-spacing:0.250px;white-space:pre;line-height:1;-webkit-text-stroke:0.4px #0a0a0a;">Cause</span>
<span style="position:absolute;left:1144.28px;top:1418.27px;font-size:22px;font-weight:400;font-style:normal;color:#0a0a0a;letter-spacing:0.300px;white-space:pre;line-height:1;-webkit-text-stroke:0.4px #0a0a0a;">Channel</span>
<span style="position:absolute;left:81.62px;top:1503.27px;font-size:22px;font-weight:400;font-style:normal;color:#0a0a0a;letter-spacing:0.618px;white-space:pre;line-height:1;">5b19c4c3-c69b-4d60-ac26-bce73950281e</span>
<svg style="position:absolute;left:541.00px;top:1502.60px" width="24" height="24" viewBox="0 0 24 24" fill="none" stroke="#ff0000" stroke-width="2" stroke-linecap="round" stroke-linejoin="round"><circle cx="12" cy="12" r="10"/><line x1="12" x2="12" y1="8" y2="12"/><line x1="12" x2="12.01" y1="16" y2="16"/></svg>
<span style="position:absolute;left:577.12px;top:1503.27px;font-size:22px;font-weight:400;font-style:normal;color:#0a0a0a;letter-spacing:0.535px;white-space:pre;line-height:1;">active</span>
<div style="position:absolute;left:675.00px;top:1499.30px;width:36.80px;height:31.50px;background:#fb2c36;border-radius:10px"></div>
<span style="position:absolute;left:688.17px;top:1503.98px;font-size:18.8px;font-weight:700;font-style:normal;color:#fff;letter-spacing:0.000px;white-space:pre;line-height:1;">5</span>
<span style="position:absolute;left:781.88px;top:1487.47px;font-size:22px;font-weight:400;font-style:normal;color:#0a0a0a;letter-spacing:0.147px;white-space:pre;line-height:1;">Critical: Total Pressure Loss</span>
<span style="position:absolute;left:781.62px;top:1517.77px;font-size:22px;font-weight:400;font-style:normal;color:#0a0a0a;letter-spacing:0.285px;white-space:pre;line-height:1;">(Major Burst)</span>
<span style="position:absolute;left:1143.65px;top:1487.47px;font-size:22px;font-weight:400;font-style:normal;color:#0a0a0a;letter-spacing:0.347px;white-space:pre;line-height:1;">Pressure-</span>
<span style="position:absolute;left:1144.03px;top:1517.77px;font-size:22px;font-weight:400;font-style:normal;color:#0a0a0a;letter-spacing:0.533px;white-space:pre;line-height:1;">monitoring</span>
<span style="position:absolute;left:81.62px;top:1588.27px;font-size:22px;font-weight:400;font-style:normal;color:#0a0a0a;letter-spacing:0.557px;white-space:pre;line-height:1;">e5dcbd8e-0fce-4dda-8b1c-4617472eff53</span>
<svg style="position:absolute;left:541.00px;top:1587.60px" width="24" height="24" viewBox="0 0 24 24" fill="none" stroke="#008000" stroke-width="2" stroke-linecap="round" stroke-linejoin="round"><circle cx="12" cy="12" r="10"/><path d="m9 12 2 2 4-4"/></svg>
<span style="position:absolute;left:577.12px;top:1588.27px;font-size:22px;font-weight:400;font-style:normal;color:#0a0a0a;letter-spacing:0.487px;white-space:pre;line-height:1;">cleared</span>
<div style="position:absolute;left:675.00px;top:1584.30px;width:36.80px;height:31.50px;background:#fb2c36;border-radius:10px"></div>
<span style="position:absolute;left:688.17px;top:1588.98px;font-size:18.8px;font-weight:700;font-style:normal;color:#fff;letter-spacing:0.000px;white-space:pre;line-height:1;">5</span>
<span style="position:absolute;left:781.88px;top:1572.47px;font-size:22px;font-weight:400;font-style:normal;color:#0a0a0a;letter-spacing:0.147px;white-space:pre;line-height:1;">Critical: Total Pressure Loss</span>
<span style="position:absolute;left:781.62px;top:1602.77px;font-size:22px;font-weight:400;font-style:normal;color:#0a0a0a;letter-spacing:0.285px;white-space:pre;line-height:1;">(Major Burst)</span>
<span style="position:absolute;left:1143.65px;top:1572.47px;font-size:22px;font-weight:400;font-style:normal;color:#0a0a0a;letter-spacing:0.347px;white-space:pre;line-height:1;">Pressure-</span>
<span style="position:absolute;left:1144.03px;top:1602.77px;font-size:22px;font-weight:400;font-style:normal;color:#0a0a0a;letter-spacing:0.533px;white-space:pre;line-height:1;">monitoring</span>
<svg style="position:absolute;left:1380px;top:933px" width="895" height="682" viewBox="0 0 895 682" font-family="Liberation Sans, sans-serif">
<rect x="0" y="0" width="895" height="682" fill="#f2efe9"/>
<polygon points="0.0,0.0 895.0,0.0 895.0,176.0 779.0,176.0 744.0,136.0 706.0,139.0 621.0,109.0 564.0,90.0 519.0,99.0 486.0,99.0 439.0,91.0 403.0,82.0 287.5,53.8 257.5,110.0 226.2,157.5 215.0,160.0 215.0,220.0 172.5,247.5 100.0,246.2 25.0,243.8 0.0,240.0 0.0,205.0 5.0,205.0 62.5,60.0 0.0,40.0" fill="#add19e"/>
<polygon points="0.0,248.2 56.2,270.7 124.8,309.4 162.3,335.6 184.8,364.3 189.8,383.1 190.0,366.0 186.2,461.0 178.8,598.5 172.5,661.0 136.1,605.0 131.1,563.1 127.3,519.4 123.6,496.9 112.4,466.9 92.4,440.7 49.9,407.0 8.7,373.1 -1.2,365.6" fill="#c8facc"/>
<polygon points="0.0,263.2 31.2,272.6 106.1,314.4 149.8,355.6 171.0,393.0 152.3,401.8 117.4,380.6 81.1,346.9 37.5,306.9 0.0,281.9" fill="#add19e"/>
<polygon points="0.0,314.4 27.5,330.6 81.1,383.1 106.1,411.8 124.8,425.7 134.8,444.5 148.6,481.9 154.2,531.8 154.2,586.8 134.8,531.8 127.3,486.9 103.6,440.7 69.9,407.0 37.5,376.8 8.7,353.1 8.7,335.6 0.0,335.6" fill="#add19e"/>
<polygon points="390.0,287.5 472.5,337.5 450.0,375.0 437.5,396.0 425.0,410.0 367.5,355.0 370.0,345.0 356.2,333.8" fill="#eeeeee" stroke="#d8cbc4" stroke-width="1" stroke-linejoin="round"/>
<polygon points="235.0,416.0 335.0,478.5 391.2,514.8 372.5,554.8 332.5,531.0 226.2,462.2" fill="#eeeeee" stroke="#dcd6d0" stroke-width="1" stroke-linejoin="round"/>
<polygon points="178.8,268.8 191.2,270.0 188.0,297.5 177.0,295.0" fill="#f6f1c8" stroke="#e8e0a0" stroke-width="1" stroke-linejoin="round"/>
<polygon points="-1.2,334.4 6.9,334.4 8.1,336.2 8.1,380.6 6.9,382.4 -1.2,382.4" fill="#eeeed5" stroke="#dfdfc6" stroke-width="1" stroke-linejoin="round"/>
<polygon points="18.8,571.0 33.8,569.8 34.5,591.5 19.5,593.0" fill="#aad3df"/>
<polygon points="90.0,586.0 75.0,589.8 63.8,608.5 32.5,636.0 0.0,653.5 0.0,682.0 15.0,682.0 50.0,653.5 82.5,621.0 92.5,598.5" fill="#ececec"/>
<polygon points="859.0,533.5 895.0,526.0 895.0,586.0 864.0,608.5 854.0,573.5" fill="#fefee0"/>
<g fill="none" stroke="#86b978" stroke-width="1.1" stroke-linecap="round">
<g transform="translate(169.0,20.0)"><circle cx="-3.8" cy="-3.2" r="3"/><path d="M-3.8,-0.2V7 M3.6,1.8V7 M0.8,1.8 L3.6,-7 L6.4,1.8"/></g>
<g transform="translate(264.0,17.0)"><circle cx="-3.8" cy="-3.2" r="3"/><path d="M-3.8,-0.2V7 M3.6,1.8V7 M0.8,1.8 L3.6,-7 L6.4,1.8"/></g>
<g transform="translate(442.0,17.5)"><circle cx="-3.8" cy="-3.2" r="3"/><path d="M-3.8,-0.2V7 M3.6,1.8V7 M0.8,1.8 L3.6,-7 L6.4,1.8"/></g>
<g transform="translate(152.5,65.5)"><circle cx="-3.8" cy="-3.2" r="3"/><path d="M-3.8,-0.2V7 M3.6,1.8V7 M0.8,1.8 L3.6,-7 L6.4,1.8"/></g>
<g transform="translate(249.0,72.5)"><circle cx="-3.8" cy="-3.2" r="3"/><path d="M-3.8,-0.2V7 M3.6,1.8V7 M0.8,1.8 L3.6,-7 L6.4,1.8"/></g>
<g transform="translate(435.0,66.0)"><circle cx="-3.8" cy="-3.2" r="3"/><path d="M-3.8,-0.2V7 M3.6,1.8V7 M0.8,1.8 L3.6,-7 L6.4,1.8"/></g>
<g transform="translate(535.0,67.5)"><circle cx="-3.8" cy="-3.2" r="3"/><path d="M-3.8,-0.2V7 M3.6,1.8V7 M0.8,1.8 L3.6,-7 L6.4,1.8"/></g>
<g transform="translate(110.0,122.5)"><circle cx="-3.8" cy="-3.2" r="3"/><path d="M-3.8,-0.2V7 M3.6,1.8V7 M0.8,1.8 L3.6,-7 L6.4,1.8"/></g>
<g transform="translate(166.0,117.5)"><circle cx="-3.8" cy="-3.2" r="3"/><path d="M-3.8,-0.2V7 M3.6,1.8V7 M0.8,1.8 L3.6,-7 L6.4,1.8"/></g>
<g transform="translate(150.0,156.0)"><circle cx="-3.8" cy="-3.2" r="3"/><path d="M-3.8,-0.2V7 M3.6,1.8V7 M0.8,1.8 L3.6,-7 L6.4,1.8"/></g>
<g transform="translate(107.5,181.0)"><circle cx="-3.8" cy="-3.2" r="3"/><path d="M-3.8,-0.2V7 M3.6,1.8V7 M0.8,1.8 L3.6,-7 L6.4,1.8"/></g>
<g transform="translate(195.0,197.5)"><circle cx="-3.8" cy="-3.2" r="3"/><path d="M-3.8,-0.2V7 M3.6,1.8V7 M0.8,1.8 L3.6,-7 L6.4,1.8"/></g>
<g transform="translate(75.0,209.0)"><circle cx="-3.8" cy="-3.2" r="3"/><path d="M-3.8,-0.2V7 M3.6,1.8V7 M0.8,1.8 L3.6,-7 L6.4,1.8"/></g>
<g transform="translate(140.0,212.0)"><circle cx="-3.8" cy="-3.2" r="3"/><path d="M-3.8,-0.2V7 M3.6,1.8V7 M0.8,1.8 L3.6,-7 L6.4,1.8"/></g>
<g transform="translate(20.0,220.0)"><circle cx="-3.8" cy="-3.2" r="3"/><path d="M-3.8,-0.2V7 M3.6,1.8V7 M0.8,1.8 L3.6,-7 L6.4,1.8"/></g>
<g transform="translate(511.5,25.0)"><circle cx="-3.8" cy="-3.2" r="3"/><path d="M-3.8,-0.2V7 M3.6,1.8V7 M0.8,1.8 L3.6,-7 L6.4,1.8"/></g>
<g transform="translate(599.0,47.5)"><circle cx="-3.8" cy="-3.2" r="3"/><path d="M-3.8,-0.2V7 M3.6,1.8V7 M0.8,1.8 L3.6,-7 L6.4,1.8"/></g>
<g transform="translate(731.5,32.5)"><circle cx="-3.8" cy="-3.2" r="3"/><path d="M-3.8,-0.2V7 M3.6,1.8V7 M0.8,1.8 L3.6,-7 L6.4,1.8"/></g>
<g transform="translate(779.0,40.0)"><circle cx="-3.8" cy="-3.2" r="3"/><path d="M-3.8,-0.2V7 M3.6,1.8V7 M0.8,1.8 L3.6,-7 L6.4,1.8"/></g>
<g transform="translate(825.0,20.0)"><circle cx="-3.8" cy="-3.2" r="3"/><path d="M-3.8,-0.2V7 M3.6,1.8V7 M0.8,1.8 L3.6,-7 L6.4,1.8"/></g>
<g transform="translate(891.5,26.0)"><circle cx="-3.8" cy="-3.2" r="3"/><path d="M-3.8,-0.2V7 M3.6,1.8V7 M0.8,1.8 L3.6,-7 L6.4,1.8"/></g>
<g transform="translate(721.5,78.7)"><circle cx="-3.8" cy="-3.2" r="3"/><path d="M-3.8,-0.2V7 M3.6,1.8V7 M0.8,1.8 L3.6,-7 L6.4,1.8"/></g>
<g transform="translate(819.0,70.0)"><circle cx="-3.8" cy="-3.2" r="3"/><path d="M-3.8,-0.2V7 M3.6,1.8V7 M0.8,1.8 L3.6,-7 L6.4,1.8"/></g>
<g transform="translate(866.5,66.0)"><circle cx="-3.8" cy="-3.2" r="3"/><path d="M-3.8,-0.2V7 M3.6,1.8V7 M0.8,1.8 L3.6,-7 L6.4,1.8"/></g>
<g transform="translate(766.5,91.0)"><circle cx="-3.8" cy="-3.2" r="3"/><path d="M-3.8,-0.2V7 M3.6,1.8V7 M0.8,1.8 L3.6,-7 L6.4,1.8"/></g>
<g transform="translate(675.0,105.0)"><circle cx="-3.8" cy="-3.2" r="3"/><path d="M-3.8,-0.2V7 M3.6,1.8V7 M0.8,1.8 L3.6,-7 L6.4,1.8"/></g>
<g transform="translate(840.0,112.5)"><circle cx="-3.8" cy="-3.2" r="3"/><path d="M-3.8,-0.2V7 M3.6,1.8V7 M0.8,1.8 L3.6,-7 L6.4,1.8"/></g>
<g transform="translate(744.0,127.5)"><circle cx="-3.8" cy="-3.2" r="3"/><path d="M-3.8,-0.2V7 M3.6,1.8V7 M0.8,1.8 L3.6,-7 L6.4,1.8"/></g>
<g transform="translate(796.5,126.0)"><circle cx="-3.8" cy="-3.2" r="3"/><path d="M-3.8,-0.2V7 M3.6,1.8V7 M0.8,1.8 L3.6,-7 L6.4,1.8"/></g>
<g transform="translate(881.5,122.5)"><circle cx="-3.8" cy="-3.2" r="3"/><path d="M-3.8,-0.2V7 M3.6,1.8V7 M0.8,1.8 L3.6,-7 L6.4,1.8"/></g>
<g transform="translate(836.5,158.7)"><circle cx="-3.8" cy="-3.2" r="3"/><path d="M-3.8,-0.2V7 M3.6,1.8V7 M0.8,1.8 L3.6,-7 L6.4,1.8"/></g>
<g transform="translate(781.5,167.5)"><circle cx="-3.8" cy="-3.2" r="3"/><path d="M-3.8,-0.2V7 M3.6,1.8V7 M0.8,1.8 L3.6,-7 L6.4,1.8"/></g>
<g transform="translate(25.6,290.7)"><circle cx="-3.8" cy="-3.2" r="3"/><path d="M-3.8,-0.2V7 M3.6,1.8V7 M0.8,1.8 L3.6,-7 L6.4,1.8"/></g>
<g transform="translate(70.5,305.7)"><circle cx="-3.8" cy="-3.2" r="3"/><path d="M-3.8,-0.2V7 M3.6,1.8V7 M0.8,1.8 L3.6,-7 L6.4,1.8"/></g>
<g transform="translate(113.0,325.6)"><circle cx="-3.8" cy="-3.2" r="3"/><path d="M-3.8,-0.2V7 M3.6,1.8V7 M0.8,1.8 L3.6,-7 L6.4,1.8"/></g>
<g transform="translate(146.7,365.6)"><circle cx="-3.8" cy="-3.2" r="3"/><path d="M-3.8,-0.2V7 M3.6,1.8V7 M0.8,1.8 L3.6,-7 L6.4,1.8"/></g>
<g transform="translate(2.5,327.0)"><circle cx="-3.8" cy="-3.2" r="3"/><path d="M-3.8,-0.2V7 M3.6,1.8V7 M0.8,1.8 L3.6,-7 L6.4,1.8"/></g>
<g transform="translate(148.0,541.0)"><circle cx="-3.8" cy="-3.2" r="3"/><path d="M-3.8,-0.2V7 M3.6,1.8V7 M0.8,1.8 L3.6,-7 L6.4,1.8"/></g>
<g transform="translate(238.0,75.0)"><circle cx="-3.8" cy="-3.2" r="3"/><path d="M-3.8,-0.2V7 M3.6,1.8V7 M0.8,1.8 L3.6,-7 L6.4,1.8"/></g>
<g transform="translate(62.0,100.0)"><circle cx="-3.8" cy="-3.2" r="3"/><path d="M-3.8,-0.2V7 M3.6,1.8V7 M0.8,1.8 L3.6,-7 L6.4,1.8"/></g>
</g>
<polygon points="75.0,7.5 86.2,5.0 95.0,17.5 85.0,28.8 75.0,27.5" fill="#d9d0c9" stroke="#c4b7ab" stroke-width="1" stroke-linejoin="round"/>
<polygon points="97.5,0.0 110.0,0.0 106.2,10.0 96.2,6.2" fill="#d9d0c9" stroke="#c4b7ab" stroke-width="1" stroke-linejoin="round"/>
<polygon points="125.0,2.5 157.5,10.0 150.0,27.5 120.0,20.0" fill="#d9d0c9" stroke="#c4b7ab" stroke-width="1" stroke-linejoin="round"/>
<polygon points="117.5,28.8 147.5,37.5 140.0,53.8 111.2,45.0" fill="#d9d0c9" stroke="#c4b7ab" stroke-width="1" stroke-linejoin="round"/>
<polygon points="98.8,40.0 107.5,41.2 106.2,50.0 98.8,48.8" fill="#d9d0c9" stroke="#c4b7ab" stroke-width="1" stroke-linejoin="round"/>
<polygon points="120.0,51.2 128.8,53.8 126.2,61.2 118.8,60.0" fill="#d9d0c9" stroke="#c4b7ab" stroke-width="1" stroke-linejoin="round"/>
<polygon points="76.2,85.0 97.5,91.2 92.5,112.5 71.2,106.2" fill="#d9d0c9" stroke="#c4b7ab" stroke-width="1" stroke-linejoin="round"/>
<polygon points="70.0,110.0 90.0,117.5 83.8,135.0 65.0,127.5" fill="#d9d0c9" stroke="#c4b7ab" stroke-width="1" stroke-linejoin="round"/>
<polygon points="63.8,136.2 80.0,141.2 75.0,155.0 60.0,150.0" fill="#d9d0c9" stroke="#c4b7ab" stroke-width="1" stroke-linejoin="round"/>
<polygon points="125.0,101.2 143.8,106.2 140.0,117.5 130.0,115.0 127.5,125.0 117.5,122.5" fill="#d9d0c9" stroke="#c4b7ab" stroke-width="1" stroke-linejoin="round"/>
<polygon points="146.2,110.0 163.8,112.5 160.0,143.8 142.5,141.2" fill="#d9d0c9" stroke="#c4b7ab" stroke-width="1" stroke-linejoin="round"/>
<polygon points="117.5,123.8 137.5,128.8 132.5,140.0 113.8,135.0" fill="#d9d0c9" stroke="#c4b7ab" stroke-width="1" stroke-linejoin="round"/>
<polygon points="110.0,137.5 130.0,143.8 125.0,156.2 106.2,150.0" fill="#d9d0c9" stroke="#c4b7ab" stroke-width="1" stroke-linejoin="round"/>
<polygon points="162.5,136.2 195.0,147.5 190.0,161.2 158.8,150.0" fill="#d9d0c9" stroke="#c4b7ab" stroke-width="1" stroke-linejoin="round"/>
<polygon points="103.8,152.5 125.0,158.8 120.0,170.0 100.0,163.8" fill="#d9d0c9" stroke="#c4b7ab" stroke-width="1" stroke-linejoin="round"/>
<polygon points="131.2,162.5 190.0,183.8 185.0,200.0 127.5,178.8" fill="#d9d0c9" stroke="#c4b7ab" stroke-width="1" stroke-linejoin="round"/>
<polygon points="75.0,178.8 83.8,175.0 86.2,181.2 96.2,183.8 93.8,193.8 85.0,192.5 82.5,186.2 74.2,187.5" fill="#d9d0c9" stroke="#c4b7ab" stroke-width="1" stroke-linejoin="round"/>
<polygon points="43.8,192.5 60.0,197.5 56.2,207.5 50.0,205.5 52.0,200.0 47.5,198.8 45.5,203.8 41.2,202.5" fill="#d9d0c9" stroke="#c4b7ab" stroke-width="1" stroke-linejoin="round"/>
<polygon points="45.0,211.2 66.2,211.2 66.2,226.2 45.0,226.2" fill="#d9d0c9" stroke="#c4b7ab" stroke-width="1" stroke-linejoin="round"/>
<polygon points="117.5,197.5 130.0,200.0 126.2,215.0 160.0,217.5 156.2,235.0 135.0,231.2 121.2,221.2" fill="#d9d0c9" stroke="#c4b7ab" stroke-width="1" stroke-linejoin="round"/>
<polygon points="105.0,225.0 128.8,240.0 125.0,250.0 101.2,240.0" fill="#d9d0c9" stroke="#c4b7ab" stroke-width="1" stroke-linejoin="round"/>
<polygon points="98.8,245.0 155.0,265.0 152.5,277.5 96.2,255.0" fill="#d9d0c9" stroke="#c4b7ab" stroke-width="1" stroke-linejoin="round"/>
<polygon points="160.0,265.0 171.2,266.2 170.0,287.5 158.8,285.0" fill="#d9d0c9" stroke="#c4b7ab" stroke-width="1" stroke-linejoin="round"/>
<polygon points="278.8,0.0 293.8,0.0 291.2,10.0 277.5,7.5" fill="#d9d0c9" stroke="#c4b7ab" stroke-width="1" stroke-linejoin="round"/>
<polygon points="290.0,17.5 303.8,21.2 301.2,30.0 287.5,26.2" fill="#d9d0c9" stroke="#c4b7ab" stroke-width="1" stroke-linejoin="round"/>
<polygon points="321.2,17.5 358.8,27.5 353.8,50.0 317.5,40.0" fill="#d9d0c9" stroke="#c4b7ab" stroke-width="1" stroke-linejoin="round"/>
<polygon points="360.0,27.5 375.0,32.5 370.0,46.2 356.2,42.5" fill="#d9d0c9" stroke="#c4b7ab" stroke-width="1" stroke-linejoin="round"/>
<polygon points="373.8,7.5 385.0,0.0 413.8,5.0 407.5,37.5 370.0,25.0" fill="#d9d0c9" stroke="#c4b7ab" stroke-width="1" stroke-linejoin="round"/>
<polygon points="370.0,40.0 393.8,46.2 388.8,63.8 366.2,57.5" fill="#d9d0c9" stroke="#c4b7ab" stroke-width="1" stroke-linejoin="round"/>
<polygon points="265.0,70.0 276.2,61.2 287.5,72.5 275.0,83.8" fill="#d9d0c9" stroke="#c4b7ab" stroke-width="1" stroke-linejoin="round"/>
<polygon points="302.5,56.2 321.2,61.2 303.8,113.8 285.0,108.8" fill="#d9d0c9" stroke="#c4b7ab" stroke-width="1" stroke-linejoin="round"/>
<polygon points="322.5,66.2 336.2,70.0 322.5,118.8 307.5,115.0" fill="#d9d0c9" stroke="#c4b7ab" stroke-width="1" stroke-linejoin="round"/>
<polygon points="450.0,35.0 472.5,40.0 457.5,80.0 443.8,76.2" fill="#d9d0c9" stroke="#c4b7ab" stroke-width="1" stroke-linejoin="round"/>
<polygon points="483.8,52.5 501.2,53.8 497.5,82.5 486.2,100.0 473.8,117.5 465.0,107.5 475.0,82.5" fill="#d9d0c9" stroke="#c4b7ab" stroke-width="1" stroke-linejoin="round"/>
<polygon points="335.0,112.5 382.5,120.0 378.8,136.2 331.2,128.8" fill="#d9d0c9" stroke="#c4b7ab" stroke-width="1" stroke-linejoin="round"/>
<polygon points="385.0,92.0 390.5,93.2 386.8,110.0 381.2,108.8" fill="#d9d0c9" stroke="#c4b7ab" stroke-width="1" stroke-linejoin="round"/>
<polygon points="393.8,96.2 436.2,107.5 430.0,130.0 388.8,118.8" fill="#d9d0c9" stroke="#c4b7ab" stroke-width="1" stroke-linejoin="round"/>
<polygon points="435.0,116.2 453.8,121.2 448.8,146.2 430.0,141.2" fill="#d9d0c9" stroke="#c4b7ab" stroke-width="1" stroke-linejoin="round"/>
<polygon points="406.2,143.8 426.2,150.0 421.2,163.8 401.2,157.5" fill="#d9d0c9" stroke="#c4b7ab" stroke-width="1" stroke-linejoin="round"/>
<polygon points="377.5,132.5 405.0,140.0 401.2,152.5 375.0,145.0" fill="#d9d0c9" stroke="#c4b7ab" stroke-width="1" stroke-linejoin="round"/>
<polygon points="455.0,125.0 465.0,127.5 462.5,135.0 453.8,132.5" fill="#d9d0c9" stroke="#c4b7ab" stroke-width="1" stroke-linejoin="round"/>
<polygon points="310.0,167.5 335.0,175.0 325.0,207.5 300.0,198.8" fill="#d9d0c9" stroke="#c4b7ab" stroke-width="1" stroke-linejoin="round"/>
<polygon points="335.0,185.0 342.5,186.2 341.2,220.0 335.0,218.8" fill="#d9d0c9" stroke="#c4b7ab" stroke-width="1" stroke-linejoin="round"/>
<polygon points="288.8,206.2 336.2,225.0 327.5,248.8 281.2,228.8" fill="#d9d0c9" stroke="#c4b7ab" stroke-width="1" stroke-linejoin="round"/>
<polygon points="367.5,186.2 387.5,198.8 355.0,243.8 337.5,230.0" fill="#d9d0c9" stroke="#c4b7ab" stroke-width="1" stroke-linejoin="round"/>
<polygon points="390.0,210.0 415.0,225.0 410.0,240.0 385.0,226.2" fill="#d9d0c9" stroke="#c4b7ab" stroke-width="1" stroke-linejoin="round"/>
<polygon points="425.0,230.0 442.5,231.2 452.5,241.2 447.5,260.0 435.0,266.2 422.5,260.0 418.8,243.8" fill="#d9d0c9" stroke="#c4b7ab" stroke-width="1" stroke-linejoin="round"/>
<polygon points="410.0,252.5 425.0,260.0 435.0,265.0 425.0,286.2 410.0,282.5 404.5,275.0" fill="#d9d0c9" stroke="#c4b7ab" stroke-width="1" stroke-linejoin="round"/>
<polygon points="461.2,216.2 471.2,220.0 460.0,238.8 452.5,235.0" fill="#d9d0c9" stroke="#c4b7ab" stroke-width="1" stroke-linejoin="round"/>
<polygon points="462.5,236.2 476.2,241.2 473.8,252.5 482.5,256.2 473.8,278.8 451.2,271.2" fill="#d9d0c9" stroke="#c4b7ab" stroke-width="1" stroke-linejoin="round"/>
<polygon points="490.0,252.5 528.8,268.8 515.0,287.5 505.0,283.8 508.8,275.0 486.2,265.0" fill="#d9d0c9" stroke="#c4b7ab" stroke-width="1" stroke-linejoin="round"/>
<polygon points="503.8,287.5 516.2,292.5 508.8,307.5 497.5,302.5" fill="#d9d0c9" stroke="#c4b7ab" stroke-width="1" stroke-linejoin="round"/>
<polygon points="388.8,268.8 401.2,273.8 397.5,282.5 386.2,277.5" fill="#d9d0c9" stroke="#c4b7ab" stroke-width="1" stroke-linejoin="round"/>
<polygon points="465.0,303.8 477.5,308.8 473.8,316.2 462.5,311.2" fill="#d9d0c9" stroke="#c4b7ab" stroke-width="1" stroke-linejoin="round"/>
<polygon points="287.5,245.0 303.8,252.5 297.5,261.2 291.2,257.5 286.2,260.0 283.8,255.0" fill="#d9d0c9" stroke="#c4b7ab" stroke-width="1" stroke-linejoin="round"/>
<polygon points="268.8,252.5 280.0,255.0 291.2,272.5 281.2,282.5 267.5,262.5" fill="#d9d0c9" stroke="#c4b7ab" stroke-width="1" stroke-linejoin="round"/>
<polygon points="312.5,287.5 322.5,282.5 330.0,291.2 320.0,301.2" fill="#d9d0c9" stroke="#c4b7ab" stroke-width="1" stroke-linejoin="round"/>
<polygon points="238.8,291.2 312.5,310.0 265.0,382.5 248.8,372.5 285.0,316.2 238.8,305.0" fill="#d9d0c9" stroke="#c4b7ab" stroke-width="1" stroke-linejoin="round"/>
<polygon points="470.0,130.0 516.2,143.8 500.0,193.8 456.2,177.5" fill="#d9d0c9" stroke="#c4b7ab" stroke-width="1" stroke-linejoin="round"/>
<polygon points="537.5,148.8 546.2,151.2 531.2,187.5 522.5,185.0" fill="#d9d0c9" stroke="#c4b7ab" stroke-width="1" stroke-linejoin="round"/>
<polygon points="548.8,158.8 571.2,162.5 567.5,180.0 546.2,175.0" fill="#d9d0c9" stroke="#c4b7ab" stroke-width="1" stroke-linejoin="round"/>
<polygon points="557.5,145.0 563.8,145.8 563.0,151.2 557.0,150.5" fill="#d9d0c9" stroke="#c4b7ab" stroke-width="1" stroke-linejoin="round"/>
<polygon points="496.5,0.0 521.5,2.5 519.0,12.5 495.2,8.8" fill="#d9d0c9" stroke="#c4b7ab" stroke-width="1" stroke-linejoin="round"/>
<polygon points="522.8,1.2 550.2,5.0 546.5,18.8 520.2,13.8" fill="#d9d0c9" stroke="#c4b7ab" stroke-width="1" stroke-linejoin="round"/>
<polygon points="551.5,6.2 571.5,10.0 566.5,28.8 547.8,23.8" fill="#d9d0c9" stroke="#c4b7ab" stroke-width="1" stroke-linejoin="round"/>
<polygon points="536.5,21.2 545.2,22.5 544.0,31.2 535.2,30.0" fill="#d9d0c9" stroke="#c4b7ab" stroke-width="1" stroke-linejoin="round"/>
<polygon points="594.0,15.0 610.2,0.0 647.8,1.2 639.0,22.5 630.2,37.5" fill="#d9d0c9" stroke="#c4b7ab" stroke-width="1" stroke-linejoin="round"/>
<polygon points="617.8,53.8 639.0,17.5 661.5,7.5 662.8,15.0 646.5,42.5 636.5,65.0" fill="#d9d0c9" stroke="#c4b7ab" stroke-width="1" stroke-linejoin="round"/>
<polygon points="664.0,32.5 676.5,35.0 665.2,57.5 649.0,53.8" fill="#d9d0c9" stroke="#c4b7ab" stroke-width="1" stroke-linejoin="round"/>
<polygon points="714.0,0.0 724.0,0.0 721.5,12.5 707.8,18.8 706.5,12.5" fill="#d9d0c9" stroke="#c4b7ab" stroke-width="1" stroke-linejoin="round"/>
<polygon points="726.5,2.5 781.5,7.5 779.0,18.8 754.0,16.2 751.5,10.0 724.0,10.0" fill="#d9d0c9" stroke="#c4b7ab" stroke-width="1" stroke-linejoin="round"/>
<polygon points="829.0,7.5 854.0,18.8 849.0,26.2 824.0,15.0" fill="#d9d0c9" stroke="#c4b7ab" stroke-width="1" stroke-linejoin="round"/>
<polygon points="846.5,77.5 857.8,78.8 854.0,107.5 842.8,106.2" fill="#d9d0c9" stroke="#c4b7ab" stroke-width="1" stroke-linejoin="round"/>
<polygon points="886.5,65.0 896.5,66.2 896.5,75.0 884.0,73.8" fill="#d9d0c9" stroke="#c4b7ab" stroke-width="1" stroke-linejoin="round"/>
<polygon points="881.5,80.0 891.5,82.5 885.2,93.8 877.8,91.2" fill="#d9d0c9" stroke="#c4b7ab" stroke-width="1" stroke-linejoin="round"/>
<polygon points="864.0,95.0 876.5,93.8 879.0,102.5 896.5,107.5 896.5,118.8 859.0,110.0" fill="#d9d0c9" stroke="#c4b7ab" stroke-width="1" stroke-linejoin="round"/>
<polygon points="800.2,100.0 835.2,118.8 822.8,138.8 811.5,132.5 815.2,123.8 791.5,113.8" fill="#d9d0c9" stroke="#c4b7ab" stroke-width="1" stroke-linejoin="round"/>
<polygon points="835.2,122.5 841.5,123.8 837.8,133.8 832.8,132.5" fill="#d9d0c9" stroke="#c4b7ab" stroke-width="1" stroke-linejoin="round"/>
<polygon points="779.0,147.5 824.0,152.5 821.5,160.0 812.8,170.0 776.5,162.5" fill="#d9d0c9" stroke="#c4b7ab" stroke-width="1" stroke-linejoin="round"/>
<polygon points="661.5,95.0 670.2,93.8 671.5,110.0 662.8,110.0" fill="#d9d0c9" stroke="#c4b7ab" stroke-width="1" stroke-linejoin="round"/>
<polygon points="677.8,111.2 702.8,111.2 702.8,127.5 677.8,127.5" fill="#d9d0c9" stroke="#c4b7ab" stroke-width="1" stroke-linejoin="round"/>
<polygon points="455.2,125.0 464.0,127.5 462.8,133.8 454.0,131.2" fill="#d9d0c9" stroke="#c4b7ab" stroke-width="1" stroke-linejoin="round"/>
<polygon points="574.0,103.8 589.0,98.8 591.5,106.2 576.5,112.5" fill="#d9d0c9" stroke="#c4b7ab" stroke-width="1" stroke-linejoin="round"/>
<polygon points="561.5,130.0 584.0,122.5 589.0,136.2 574.0,141.2 567.8,145.0" fill="#d9d0c9" stroke="#c4b7ab" stroke-width="1" stroke-linejoin="round"/>
<polygon points="587.8,118.8 602.8,111.2 616.5,138.8 602.8,146.2" fill="#d9d0c9" stroke="#c4b7ab" stroke-width="1" stroke-linejoin="round"/>
<polygon points="590.2,148.8 605.2,147.5 604.0,158.8 591.5,156.2" fill="#d9d0c9" stroke="#c4b7ab" stroke-width="1" stroke-linejoin="round"/>
<polygon points="556.5,145.0 564.0,146.2 562.8,151.2 556.0,150.0" fill="#d9d0c9" stroke="#c4b7ab" stroke-width="1" stroke-linejoin="round"/>
<polygon points="566.5,148.8 571.5,149.5 570.8,155.0 566.0,154.2" fill="#d9d0c9" stroke="#c4b7ab" stroke-width="1" stroke-linejoin="round"/>
<polygon points="621.5,107.5 661.0,107.5 661.0,160.0 622.0,160.0" fill="#d9d0c9" stroke="#c4b7ab" stroke-width="1" stroke-linejoin="round"/>
<polygon points="539.0,148.8 546.5,151.2 530.2,187.5 522.8,185.0" fill="#d9d0c9" stroke="#c4b7ab" stroke-width="1" stroke-linejoin="round"/>
<polygon points="547.8,158.8 570.2,162.5 567.8,180.0 546.5,175.0" fill="#d9d0c9" stroke="#c4b7ab" stroke-width="1" stroke-linejoin="round"/>
<polygon points="549.0,192.5 585.2,197.5 584.0,210.0 547.8,206.2" fill="#d9d0c9" stroke="#c4b7ab" stroke-width="1" stroke-linejoin="round"/>
<polygon points="612.8,176.2 675.2,192.5 659.0,252.5 626.5,243.8 632.8,228.8 646.5,226.2 649.0,217.5 606.5,207.5" fill="#d9d0c9" stroke="#c4b7ab" stroke-width="1" stroke-linejoin="round"/>
<polygon points="669.0,157.5 715.2,170.0 710.2,186.2 665.2,175.0" fill="#d9d0c9" stroke="#c4b7ab" stroke-width="1" stroke-linejoin="round"/>
<polygon points="726.5,146.2 754.0,152.5 750.2,170.0 760.2,172.5 754.0,197.5 741.5,195.0 744.0,180.0 717.8,178.8" fill="#d9d0c9" stroke="#c4b7ab" stroke-width="1" stroke-linejoin="round"/>
<polygon points="764.0,183.8 790.2,191.2 776.5,237.5 751.5,230.0" fill="#d9d0c9" stroke="#c4b7ab" stroke-width="1" stroke-linejoin="round"/>
<polygon points="684.0,207.5 749.0,225.0 744.0,240.0 730.2,236.2 724.0,260.0 677.8,246.2" fill="#d9d0c9" stroke="#c4b7ab" stroke-width="1" stroke-linejoin="round"/>
<polygon points="824.0,190.0 832.8,190.0 832.8,198.8 824.0,198.8" fill="#d9d0c9" stroke="#c4b7ab" stroke-width="1" stroke-linejoin="round"/>
<polygon points="807.8,217.5 830.2,222.5 827.8,231.2 806.5,225.0" fill="#d9d0c9" stroke="#c4b7ab" stroke-width="1" stroke-linejoin="round"/>
<polygon points="849.0,196.2 857.8,198.8 846.5,236.2 837.8,233.8" fill="#d9d0c9" stroke="#c4b7ab" stroke-width="1" stroke-linejoin="round"/>
<polygon points="861.5,200.0 886.5,206.2 876.5,245.0 851.5,237.5" fill="#d9d0c9" stroke="#c4b7ab" stroke-width="1" stroke-linejoin="round"/>
<polygon points="820.2,243.8 846.5,246.2 845.2,262.5 839.0,262.5 839.0,252.5 824.0,251.2 824.0,255.0 819.0,255.0" fill="#d9d0c9" stroke="#c4b7ab" stroke-width="1" stroke-linejoin="round"/>
<polygon points="859.0,246.2 876.5,243.8 871.5,262.5 864.0,260.0 861.5,268.8 856.5,267.5" fill="#d9d0c9" stroke="#c4b7ab" stroke-width="1" stroke-linejoin="round"/>
<polygon points="807.8,275.0 821.5,276.2 829.0,280.0 827.8,286.2 816.5,286.2 815.2,291.2 807.8,291.2" fill="#d9d0c9" stroke="#c4b7ab" stroke-width="1" stroke-linejoin="round"/>
<polygon points="836.5,272.5 864.0,275.0 856.5,292.5 841.5,302.5 834.0,282.5" fill="#d9d0c9" stroke="#c4b7ab" stroke-width="1" stroke-linejoin="round"/>
<polygon points="599.0,278.8 654.0,295.0 589.0,402.5 540.2,378.8" fill="#d9d0c9" stroke="#c4b7ab" stroke-width="1" stroke-linejoin="round"/>
<polygon points="481.5,372.2 496.5,377.2 494.0,384.8 479.0,379.8" fill="#d9d0c9" stroke="#c4b7ab" stroke-width="1" stroke-linejoin="round"/>
<polygon points="500.2,378.5 521.0,386.0 518.5,394.0 497.8,386.5" fill="#d9d0c9" stroke="#c4b7ab" stroke-width="1" stroke-linejoin="round"/>
<polygon points="467.8,396.0 477.8,386.0 489.0,392.2 486.5,411.0 474.0,406.0" fill="#d9d0c9" stroke="#c4b7ab" stroke-width="1" stroke-linejoin="round"/>
<polygon points="456.5,409.8 471.5,417.2 467.8,424.8 454.0,417.2" fill="#d9d0c9" stroke="#c4b7ab" stroke-width="1" stroke-linejoin="round"/>
<polygon points="449.0,422.2 464.0,429.8 460.2,436.0 446.5,428.5" fill="#d9d0c9" stroke="#c4b7ab" stroke-width="1" stroke-linejoin="round"/>
<polygon points="480.2,449.8 487.8,441.0 496.5,447.2 489.0,456.0" fill="#d9d0c9" stroke="#c4b7ab" stroke-width="1" stroke-linejoin="round"/>
<polygon points="484.0,461.0 520.2,464.8 519.0,479.8 484.0,476.0" fill="#d9d0c9" stroke="#c4b7ab" stroke-width="1" stroke-linejoin="round"/>
<polygon points="470.2,464.8 479.0,467.2 475.2,476.0 467.8,472.2" fill="#d9d0c9" stroke="#c4b7ab" stroke-width="1" stroke-linejoin="round"/>
<polygon points="424.0,481.0 441.5,487.2 436.5,498.5 421.5,491.0" fill="#d9d0c9" stroke="#c4b7ab" stroke-width="1" stroke-linejoin="round"/>
<polygon points="440.2,484.8 454.0,488.5 450.2,498.5 437.8,494.8" fill="#d9d0c9" stroke="#c4b7ab" stroke-width="1" stroke-linejoin="round"/>
<polygon points="539.0,476.0 576.5,491.0 571.5,501.0 536.5,486.0" fill="#d9d0c9" stroke="#c4b7ab" stroke-width="1" stroke-linejoin="round"/>
<polygon points="549.0,446.0 564.0,448.5 589.0,463.5 585.2,472.2 559.0,461.0 546.5,456.0" fill="#d9d0c9" stroke="#c4b7ab" stroke-width="1" stroke-linejoin="round"/>
<polygon points="619.0,458.5 656.5,473.5 649.0,488.5 616.5,472.2" fill="#d9d0c9" stroke="#c4b7ab" stroke-width="1" stroke-linejoin="round"/>
<polygon points="594.0,481.0 631.5,498.5 625.2,511.0 587.8,493.5" fill="#d9d0c9" stroke="#c4b7ab" stroke-width="1" stroke-linejoin="round"/>
<polygon points="536.5,493.5 555.2,501.0 550.2,512.2 532.8,504.8" fill="#d9d0c9" stroke="#c4b7ab" stroke-width="1" stroke-linejoin="round"/>
<polygon points="674.0,458.5 694.0,466.0 669.0,506.0 656.5,498.5" fill="#d9d0c9" stroke="#c4b7ab" stroke-width="1" stroke-linejoin="round"/>
<polygon points="631.5,501.0 649.0,506.0 611.5,568.5 599.0,561.0" fill="#d9d0c9" stroke="#c4b7ab" stroke-width="1" stroke-linejoin="round"/>
<polygon points="579.0,498.5 596.5,506.0 589.0,518.5 576.5,513.5" fill="#d9d0c9" stroke="#c4b7ab" stroke-width="1" stroke-linejoin="round"/>
<polygon points="516.5,512.2 550.2,527.2 545.2,538.5 514.0,523.5" fill="#d9d0c9" stroke="#c4b7ab" stroke-width="1" stroke-linejoin="round"/>
<polygon points="511.5,536.0 531.5,543.5 526.5,556.0 509.0,548.5" fill="#d9d0c9" stroke="#c4b7ab" stroke-width="1" stroke-linejoin="round"/>
<polygon points="659.0,516.0 702.8,541.0 689.0,566.0 674.0,557.2 676.5,551.0 664.0,543.5 659.0,551.0 646.5,541.0" fill="#d9d0c9" stroke="#c4b7ab" stroke-width="1" stroke-linejoin="round"/>
<polygon points="546.5,556.0 596.5,578.5 586.5,591.0 544.0,571.0" fill="#d9d0c9" stroke="#c4b7ab" stroke-width="1" stroke-linejoin="round"/>
<polygon points="636.5,559.8 651.5,567.2 646.5,573.5 671.5,581.0 664.0,593.5 649.0,586.0 641.5,588.5 634.0,584.8 639.0,573.5 634.0,568.5" fill="#d9d0c9" stroke="#c4b7ab" stroke-width="1" stroke-linejoin="round"/>
<polygon points="609.0,596.0 649.0,611.0 644.0,621.0 606.5,608.5" fill="#d9d0c9" stroke="#c4b7ab" stroke-width="1" stroke-linejoin="round"/>
<polygon points="781.5,511.0 796.5,518.5 786.5,536.0 774.0,529.8" fill="#d9d0c9" stroke="#c4b7ab" stroke-width="1" stroke-linejoin="round"/>
<polygon points="764.0,543.5 789.0,551.0 826.5,573.5 814.0,596.0 804.0,589.8 809.0,581.0 764.0,556.0" fill="#d9d0c9" stroke="#c4b7ab" stroke-width="1" stroke-linejoin="round"/>
<polygon points="826.5,538.5 841.5,544.8 835.2,557.2 821.5,551.0" fill="#d9d0c9" stroke="#c4b7ab" stroke-width="1" stroke-linejoin="round"/>
<polygon points="841.5,551.0 866.5,563.5 834.0,618.5 809.0,608.5" fill="#d9d0c9" stroke="#c4b7ab" stroke-width="1" stroke-linejoin="round"/>
<polygon points="851.5,606.0 874.0,616.0 864.0,636.0 842.8,624.8" fill="#d9d0c9" stroke="#c4b7ab" stroke-width="1" stroke-linejoin="round"/>
<polygon points="875.2,396.0 896.5,371.0 896.5,401.0 886.5,409.8" fill="#d9d0c9" stroke="#c4b7ab" stroke-width="1" stroke-linejoin="round"/>
<polygon points="696.5,656.0 704.0,621.0 719.0,608.5 739.0,603.0 759.0,608.5 767.0,631.0 761.5,656.0 749.0,686.0 696.5,686.0" fill="#d9d0c9" stroke="#c4b7ab" stroke-width="1" stroke-linejoin="round"/>
<polygon points="766.5,646.0 790.2,636.0 796.5,648.5 781.5,666.0 784.0,676.0 771.5,686.0 764.0,663.5" fill="#d9d0c9" stroke="#c4b7ab" stroke-width="1" stroke-linejoin="round"/>
<polygon points="804.0,661.0 829.0,671.0 821.5,686.0 796.5,686.0" fill="#d9d0c9" stroke="#c4b7ab" stroke-width="1" stroke-linejoin="round"/>
<polygon points="844.0,668.5 874.0,686.0 839.0,686.0" fill="#d9d0c9" stroke="#c4b7ab" stroke-width="1" stroke-linejoin="round"/>
<polygon points="336.5,571.0 359.0,576.0 354.0,593.5 332.8,586.0" fill="#d9d0c9" stroke="#c4b7ab" stroke-width="1" stroke-linejoin="round"/>
<polygon points="359.0,583.5 379.0,578.5 396.5,573.5 399.0,581.0 386.5,586.0 389.0,598.5 376.5,621.0 351.5,618.5 355.2,598.5" fill="#d9d0c9" stroke="#c4b7ab" stroke-width="1" stroke-linejoin="round"/>
<polygon points="401.5,601.0 419.0,608.5 396.5,648.5 382.8,641.0" fill="#d9d0c9" stroke="#c4b7ab" stroke-width="1" stroke-linejoin="round"/>
<polygon points="424.0,591.0 430.2,592.2 429.0,598.5 424.0,597.2" fill="#d9d0c9" stroke="#c4b7ab" stroke-width="1" stroke-linejoin="round"/>
<polygon points="439.0,607.2 452.8,611.0 450.2,621.0 469.0,628.5 489.0,634.8 486.5,646.0 474.0,666.0 454.0,686.0 414.0,686.0 410.2,661.0 424.0,646.0 431.5,618.5" fill="#d9d0c9" stroke="#c4b7ab" stroke-width="1" stroke-linejoin="round"/>
<polygon points="319.0,631.0 331.5,626.0 332.8,633.5 324.0,643.5 316.5,638.5" fill="#d9d0c9" stroke="#c4b7ab" stroke-width="1" stroke-linejoin="round"/>
<polygon points="346.5,641.0 361.5,643.5 359.0,661.0 351.5,663.5 344.0,653.5" fill="#d9d0c9" stroke="#c4b7ab" stroke-width="1" stroke-linejoin="round"/>
<polygon points="649.0,406.0 662.8,406.0 662.8,387.2 687.8,387.2 687.8,403.5 696.5,403.5 696.5,412.2 715.2,412.2 715.2,433.5 691.5,433.5 691.5,428.5 649.0,428.5" fill="#d9d0c9" stroke="#c4b7ab" stroke-width="1" stroke-linejoin="round"/>
<polygon points="826.5,429.8 896.5,461.0 896.5,506.0 807.8,466.0" fill="#c9bcb0" stroke="#b5a598" stroke-width="1" stroke-linejoin="round"/>
<polygon points="282.5,398.5 322.5,337.2 332.5,339.8 335.0,336.0 366.2,353.5 363.8,358.5 435.0,411.0 397.5,473.5" fill="#d9cec7" stroke="#c7ad9f" stroke-width="1" stroke-linejoin="round"/>
<polygon points="232.5,478.5 246.2,477.2 272.5,493.5 307.5,516.0 297.5,526.0 230.0,514.8" fill="#d9d0c9" stroke="#c4b7ab" stroke-width="1" stroke-linejoin="round"/>
<polygon points="275.0,547.2 287.5,539.8 293.8,547.2 282.5,556.0" fill="#d9d0c9" stroke="#c4b7ab" stroke-width="1" stroke-linejoin="round"/>
<polygon points="233.8,536.0 255.0,536.0 255.0,543.5 248.8,544.8 248.8,553.5 265.0,554.8 265.0,563.5 278.8,562.2 280.0,571.0 265.0,572.2 261.2,576.0 250.0,576.0 240.0,563.5 240.0,543.5 233.8,543.5" fill="#d9d0c9" stroke="#c4b7ab" stroke-width="1" stroke-linejoin="round"/>
<polygon points="232.5,574.8 277.5,573.5 277.5,592.2 232.5,592.2" fill="#d9d0c9" stroke="#c4b7ab" stroke-width="1" stroke-linejoin="round"/>
<polygon points="241.2,622.2 267.5,622.2 267.5,628.5 241.2,628.5" fill="#d9d0c9" stroke="#c4b7ab" stroke-width="1" stroke-linejoin="round"/>
<polygon points="296.2,621.0 306.2,619.8 308.8,644.8 300.0,646.0" fill="#d9d0c9" stroke="#c4b7ab" stroke-width="1" stroke-linejoin="round"/>
<polygon points="236.2,644.8 273.8,643.5 273.8,652.2 236.2,653.0" fill="#d9d0c9" stroke="#c4b7ab" stroke-width="1" stroke-linejoin="round"/>
<polygon points="247.5,637.2 265.0,637.2 265.0,643.5 247.5,643.5" fill="#d9d0c9" stroke="#c4b7ab" stroke-width="1" stroke-linejoin="round"/>
<polygon points="315.0,633.5 327.5,624.8 332.5,632.2 322.5,643.5" fill="#d9d0c9" stroke="#c4b7ab" stroke-width="1" stroke-linejoin="round"/>
<polygon points="217.5,628.5 226.2,628.5 225.0,653.5 217.5,653.5" fill="#d9d0c9" stroke="#c4b7ab" stroke-width="1" stroke-linejoin="round"/>
<polygon points="346.2,641.0 361.2,642.2 360.0,661.0 350.0,663.5 343.8,653.5" fill="#d9d0c9" stroke="#c4b7ab" stroke-width="1" stroke-linejoin="round"/>
<polygon points="257.5,672.2 271.2,671.0 271.2,686.0 257.5,686.0" fill="#d9d0c9" stroke="#c4b7ab" stroke-width="1" stroke-linejoin="round"/>
<polygon points="288.8,597.2 295.0,597.2 296.2,606.0 290.0,606.0" fill="#d9d0c9" stroke="#c4b7ab" stroke-width="1" stroke-linejoin="round"/>
<polygon points="0.0,426.0 17.5,433.5 10.0,446.0 0.0,441.0" fill="#d9d0c9" stroke="#c4b7ab" stroke-width="1" stroke-linejoin="round"/>
<polygon points="20.0,628.5 53.8,603.5 62.5,611.0 27.5,641.0" fill="#d9d0c9" stroke="#c4b7ab" stroke-width="1" stroke-linejoin="round"/>
<polygon points="95.0,653.5 110.0,643.5 130.0,661.0 117.5,676.0 105.0,671.0" fill="#d9d0c9" stroke="#c4b7ab" stroke-width="1" stroke-linejoin="round"/>
<polygon points="82.5,663.5 100.0,686.0 82.5,686.0" fill="#d9d0c9" stroke="#c4b7ab" stroke-width="1" stroke-linejoin="round"/>
<polygon points="0.0,583.5 15.0,598.5 5.0,608.5 0.0,606.0" fill="#d9d0c9" stroke="#c4b7ab" stroke-width="1" stroke-linejoin="round"/>
<polygon points="160.0,626.0 166.2,626.0 167.5,641.0 160.0,641.0" fill="#d9d0c9" stroke="#c4b7ab" stroke-width="1" stroke-linejoin="round"/>
<polygon points="0.0,465.7 25.0,435.1 43.7,447.0 56.2,466.9 7.5,506.9 0.0,505.6" fill="#d9d0c9" stroke="#c4b7ab" stroke-width="1" stroke-linejoin="round"/>
<polygon points="42.4,484.4 77.4,476.3 83.6,499.4 48.1,509.4" fill="#d9d0c9" stroke="#c4b7ab" stroke-width="1" stroke-linejoin="round"/>
<polygon points="5.0,513.1 42.4,505.0 45.6,523.1 9.4,531.8" fill="#d9d0c9" stroke="#c4b7ab" stroke-width="1" stroke-linejoin="round"/>
<polygon points="5.0,544.3 67.4,531.8 72.4,554.3 10.0,568.0" fill="#d9d0c9" stroke="#c4b7ab" stroke-width="1" stroke-linejoin="round"/>
<polygon points="45.6,571.8 87.4,567.4 89.3,581.8 46.8,586.8" fill="#d9d0c9" stroke="#c4b7ab" stroke-width="1" stroke-linejoin="round"/>
<polygon points="0.0,410.7 18.7,425.7 8.7,440.7 0.0,437.0" fill="#d9d0c9" stroke="#c4b7ab" stroke-width="1" stroke-linejoin="round"/>
<polygon points="101.1,227.0 117.4,227.0 116.7,233.2 129.8,240.1 126.1,250.1 99.9,238.9" fill="#d9d0c9" stroke="#c4b7ab" stroke-width="1" stroke-linejoin="round"/>
<polyline points="-10.0,21.2 50.0,42.5 100.0,61.2 150.0,76.2 207.5,96.2" fill="none" stroke="#cdc8c4" stroke-width="21.4" stroke-linecap="round" stroke-linejoin="round"/>
<polyline points="92.0,8.8 93.0,21.2 100.0,31.2 92.5,50.0 86.2,56.2" fill="none" stroke="#cdc8c4" stroke-width="10.4" stroke-linecap="round" stroke-linejoin="round"/>
<polyline points="143.8,22.5 120.0,21.2 100.0,32.0" fill="none" stroke="#cdc8c4" stroke-width="10.4" stroke-linecap="round" stroke-linejoin="round"/>
<polyline points="82.5,61.2 33.8,178.8" fill="none" stroke="#cdc8c4" stroke-width="15.4" stroke-linecap="round" stroke-linejoin="round"/>
<polyline points="117.5,78.8 87.5,156.2" fill="none" stroke="#cdc8c4" stroke-width="9.4" stroke-linecap="round" stroke-linejoin="round"/>
<polyline points="171.2,164.2 203.8,173.2" fill="none" stroke="#cdc8c4" stroke-width="11.4" stroke-linecap="round" stroke-linejoin="round"/>
<polyline points="141.2,196.2 203.8,218.0" fill="none" stroke="#cdc8c4" stroke-width="10.9" stroke-linecap="round" stroke-linejoin="round"/>
<circle cx="139.2" cy="195.8" r="8.7" fill="#cdc8c4"/>
<polyline points="250.0,27.5 325.0,51.8 397.5,74.2" fill="none" stroke="#cdc8c4" stroke-width="20.9" stroke-linecap="round" stroke-linejoin="round"/>
<polyline points="347.5,68.8 322.5,132.5" fill="none" stroke="#cdc8c4" stroke-width="15.4" stroke-linecap="round" stroke-linejoin="round"/>
<polyline points="220.0,98.8 240.0,112.5 265.0,126.2 287.5,137.0 314.0,147.5" fill="none" stroke="#cdc8c4" stroke-width="18.4" stroke-linecap="round" stroke-linejoin="round"/>
<polyline points="314.0,147.5 464.0,201.2 564.0,232.5 667.8,261.8 739.0,280.5 839.0,306.2" fill="none" stroke="#cdc8c4" stroke-width="18.4" stroke-linecap="round" stroke-linejoin="round"/>
<polyline points="416.2,101.2 391.2,163.8" fill="none" stroke="#cdc8c4" stroke-width="15.4" stroke-linecap="round" stroke-linejoin="round"/>
<polyline points="373.8,127.5 361.2,155.0" fill="none" stroke="#cdc8c4" stroke-width="7.9" stroke-linecap="round" stroke-linejoin="round"/>
<polyline points="345.0,166.2 344.2,203.8" fill="none" stroke="#cdc8c4" stroke-width="9.4" stroke-linecap="round" stroke-linejoin="round"/>
<polyline points="435.0,208.8 437.5,216.2 446.2,221.2" fill="none" stroke="#cdc8c4" stroke-width="9.4" stroke-linecap="round" stroke-linejoin="round"/>
<polyline points="467.5,228.0 493.8,236.2 500.0,225.0" fill="none" stroke="#cdc8c4" stroke-width="8.9" stroke-linecap="round" stroke-linejoin="round"/>
<polyline points="226.2,246.2 260.0,244.5 272.5,251.2" fill="none" stroke="#cdc8c4" stroke-width="10.9" stroke-linecap="round" stroke-linejoin="round"/>
<polyline points="353.8,271.2 376.2,283.8" fill="none" stroke="#cdc8c4" stroke-width="10.9" stroke-linecap="round" stroke-linejoin="round"/>
<polyline points="355.0,271.2 275.0,396.0" fill="none" stroke="#cdc8c4" stroke-width="10.9" stroke-linecap="round" stroke-linejoin="round"/>
<polyline points="347.5,288.5 271.2,398.5 265.5,408.5" fill="none" stroke="#cdc8c4" stroke-width="10.9" stroke-linecap="butt" stroke-linejoin="round"/>
<polyline points="464.0,-7.5 489.0,21.2 539.0,50.0 589.0,71.2 639.0,78.0 739.0,63.8 899.0,50.8" fill="none" stroke="#cdc8c4" stroke-width="20.4" stroke-linecap="round" stroke-linejoin="round"/>
<polyline points="486.5,26.2 466.5,75.0 457.8,84.5 445.2,86.2" fill="none" stroke="#cdc8c4" stroke-width="11.4" stroke-linecap="round" stroke-linejoin="round"/>
<polyline points="489.0,10.0 494.0,-5.0" fill="none" stroke="#cdc8c4" stroke-width="9.4" stroke-linecap="round" stroke-linejoin="round"/>
<polyline points="635.2,70.0 659.0,28.8 671.5,25.0" fill="none" stroke="#cdc8c4" stroke-width="11.4" stroke-linecap="round" stroke-linejoin="round"/>
<polyline points="681.5,63.8 707.8,-2.5" fill="none" stroke="#cdc8c4" stroke-width="10.9" stroke-linecap="round" stroke-linejoin="round"/>
<polyline points="609.0,168.0 684.0,188.0 684.8,200.0 751.5,217.0" fill="none" stroke="#cdc8c4" stroke-width="10.9" stroke-linecap="round" stroke-linejoin="round"/>
<polyline points="609.0,168.0 599.0,207.5 616.5,246.2" fill="none" stroke="#cdc8c4" stroke-width="10.9" stroke-linecap="round" stroke-linejoin="round"/>
<polyline points="684.8,198.8 666.5,252.5" fill="none" stroke="#cdc8c4" stroke-width="11.4" stroke-linecap="round" stroke-linejoin="round"/>
<polyline points="801.5,193.8 781.0,295.0" fill="none" stroke="#cdc8c4" stroke-width="10.4" stroke-linecap="round" stroke-linejoin="round"/>
<polyline points="846.5,241.2 815.2,237.5 804.5,255.0 789.0,297.5" fill="none" stroke="#cdc8c4" stroke-width="10.9" stroke-linecap="round" stroke-linejoin="round"/>
<polyline points="744.0,267.0 774.0,275.0" fill="none" stroke="#cdc8c4" stroke-width="9.4" stroke-linecap="round" stroke-linejoin="round"/>
<polyline points="685.2,253.0 719.0,267.0 724.0,277.5" fill="none" stroke="#cdc8c4" stroke-width="9.9" stroke-linecap="round" stroke-linejoin="round"/>
<polyline points="735.2,240.0 727.0,277.5" fill="none" stroke="#cdc8c4" stroke-width="9.4" stroke-linecap="round" stroke-linejoin="round"/>
<polyline points="810.2,265.0 829.0,272.5" fill="none" stroke="#cdc8c4" stroke-width="9.4" stroke-linecap="round" stroke-linejoin="round"/>
<polyline points="860.2,188.0 899.0,186.2" fill="none" stroke="#cdc8c4" stroke-width="11.4" stroke-linecap="round" stroke-linejoin="round"/>
<polyline points="704.0,288.5 630.2,416.0" fill="none" stroke="#cdc8c4" stroke-width="10.9" stroke-linecap="round" stroke-linejoin="round"/>
<polyline points="750.2,298.5 715.2,359.8" fill="none" stroke="#cdc8c4" stroke-width="17.4" stroke-linecap="round" stroke-linejoin="round"/>
<circle cx="867.8" cy="323.5" r="35.2" fill="#cdc8c4"/>
<polyline points="867.8,323.5 899.0,281.0" fill="none" stroke="#cdc8c4" stroke-width="32.4" stroke-linecap="round" stroke-linejoin="round"/>
<polyline points="864.0,328.5 834.0,376.0 739.0,526.0 664.0,643.5 631.5,696.0" fill="none" stroke="#cdc8c4" stroke-width="28.4" stroke-linecap="round" stroke-linejoin="round"/>
<polyline points="225.0,396.0 268.8,428.5 357.5,483.5" fill="none" stroke="#cdc8c4" stroke-width="21.9" stroke-linecap="round" stroke-linejoin="round"/>
<polyline points="357.5,483.5 414.0,517.2 525.2,594.8 646.5,671.0" fill="none" stroke="#cdc8c4" stroke-width="21.9" stroke-linecap="round" stroke-linejoin="round"/>
<polyline points="-5.0,236.4 59.3,261.3 124.8,298.2 194.8,343.1" fill="none" stroke="#cdc8c4" stroke-width="17.9" stroke-linecap="round" stroke-linejoin="round"/>
<polyline points="104.2,258.8 192.3,306.9" fill="none" stroke="#cdc8c4" stroke-width="9.9" stroke-linecap="round" stroke-linejoin="round"/>
<polyline points="194.1,278.8 194.1,316.9 199.8,333.1" fill="none" stroke="#cdc8c4" stroke-width="9.9" stroke-linecap="round" stroke-linejoin="round"/>
<polyline points="-2.5,287.5 56.2,334.4 112.4,390.5 149.8,408.0 189.8,419.9" fill="none" stroke="#cdc8c4" stroke-width="9.4" stroke-linecap="round" stroke-linejoin="round"/>
<polyline points="724.0,578.5 789.0,618.5 899.0,679.8" fill="none" stroke="#cdc8c4" stroke-width="18.4" stroke-linecap="round" stroke-linejoin="round"/>
<polyline points="829.0,426.0 876.5,448.5" fill="none" stroke="#cdc8c4" stroke-width="11.4" stroke-linecap="round" stroke-linejoin="round"/>
<polyline points="789.0,486.0 834.0,506.0 895.0,538.5" fill="none" stroke="#cdc8c4" stroke-width="18.4" stroke-linecap="round" stroke-linejoin="round"/>
<polyline points="687.8,442.2 691.5,458.5 736.5,486.0" fill="none" stroke="#cdc8c4" stroke-width="11.4" stroke-linecap="round" stroke-linejoin="round"/>
<polyline points="626.5,484.8 709.0,533.5" fill="none" stroke="#cdc8c4" stroke-width="10.9" stroke-linecap="round" stroke-linejoin="round"/>
<polyline points="691.5,483.5 674.0,511.0" fill="none" stroke="#cdc8c4" stroke-width="10.9" stroke-linecap="round" stroke-linejoin="round"/>
<polyline points="615.2,443.5 531.5,571.0" fill="none" stroke="#cdc8c4" stroke-width="10.9" stroke-linecap="round" stroke-linejoin="round"/>
<polyline points="581.5,561.0 604.0,573.5 584.0,608.5" fill="none" stroke="#cdc8c4" stroke-width="10.9" stroke-linecap="round" stroke-linejoin="round"/>
<polyline points="649.0,511.0 617.8,569.8" fill="none" stroke="#cdc8c4" stroke-width="6.4" stroke-linecap="round" stroke-linejoin="round"/>
<polyline points="610.2,518.5 586.5,546.0" fill="none" stroke="#cdc8c4" stroke-width="9.4" stroke-linecap="round" stroke-linejoin="round"/>
<polyline points="427.8,423.5 454.0,436.0 431.5,476.0 401.5,476.0" fill="none" stroke="#cdc8c4" stroke-width="16.4" stroke-linecap="round" stroke-linejoin="round"/>
<polyline points="446.5,393.5 484.0,421.0 431.5,496.0" fill="none" stroke="#cdc8c4" stroke-width="5.9" stroke-linecap="round" stroke-linejoin="round"/>
<polyline points="469.0,477.2 449.0,516.0" fill="none" stroke="#cdc8c4" stroke-width="10.9" stroke-linecap="round" stroke-linejoin="round"/>
<polyline points="516.5,513.5 489.0,543.5" fill="none" stroke="#cdc8c4" stroke-width="10.9" stroke-linecap="round" stroke-linejoin="round"/>
<polyline points="396.5,523.5 371.5,548.5" fill="none" stroke="#cdc8c4" stroke-width="10.9" stroke-linecap="round" stroke-linejoin="round"/>
<polyline points="434.0,546.0 369.0,626.0" fill="none" stroke="#cdc8c4" stroke-width="10.9" stroke-linecap="round" stroke-linejoin="round"/>
<polyline points="494.0,583.5 436.5,673.5" fill="none" stroke="#cdc8c4" stroke-width="10.9" stroke-linecap="round" stroke-linejoin="round"/>
<polyline points="332.8,544.8 299.0,593.5" fill="none" stroke="#cdc8c4" stroke-width="10.9" stroke-linecap="round" stroke-linejoin="round"/>
<polyline points="401.5,526.0 346.5,601.0 331.5,592.2" fill="none" stroke="#cdc8c4" stroke-width="10.9" stroke-linecap="round" stroke-linejoin="round"/>
<polyline points="791.5,531.0 790.2,548.5" fill="none" stroke="#cdc8c4" stroke-width="11.4" stroke-linecap="round" stroke-linejoin="round"/>
<polyline points="811.5,531.0 811.5,558.5" fill="none" stroke="#cdc8c4" stroke-width="11.4" stroke-linecap="round" stroke-linejoin="round"/>
<polyline points="877.8,559.8 829.0,636.0 819.0,683.5" fill="none" stroke="#cdc8c4" stroke-width="10.9" stroke-linecap="round" stroke-linejoin="round"/>
<polyline points="724.0,596.0 744.0,598.5 771.5,618.5 769.0,633.5" fill="none" stroke="#cdc8c4" stroke-width="9.4" stroke-linecap="round" stroke-linejoin="round"/>
<polyline points="786.5,623.5 895.0,686.0" fill="none" stroke="#cdc8c4" stroke-width="5.4" stroke-linecap="round" stroke-linejoin="round"/>
<polyline points="217.5,568.5 260.0,568.5" fill="none" stroke="#cdc8c4" stroke-width="10.9" stroke-linecap="round" stroke-linejoin="round"/>
<polyline points="217.5,603.5 277.5,602.2" fill="none" stroke="#cdc8c4" stroke-width="10.9" stroke-linecap="round" stroke-linejoin="round"/>
<polyline points="216.2,623.5 232.5,623.5 240.0,632.2 295.0,632.2" fill="none" stroke="#cdc8c4" stroke-width="9.9" stroke-linecap="round" stroke-linejoin="round"/>
<polyline points="215.0,664.0 270.0,659.8" fill="none" stroke="#cdc8c4" stroke-width="10.9" stroke-linecap="round" stroke-linejoin="round"/>
<polyline points="226.2,563.5 227.5,529.8 250.0,529.0" fill="none" stroke="#cdc8c4" stroke-width="5.9" stroke-linecap="round" stroke-linejoin="round"/>
<polyline points="241.2,473.5 370.0,551.0" fill="none" stroke="#cdc8c4" stroke-width="9.4" stroke-linecap="round" stroke-linejoin="round"/>
<polyline points="-5.0,544.0 101.0,521.5" fill="none" stroke="#cdc8c4" stroke-width="11.4" stroke-linecap="round" stroke-linejoin="round"/>
<polyline points="101.0,532.2 83.8,536.0 80.0,557.2 48.8,567.2" fill="none" stroke="#cdc8c4" stroke-width="9.9" stroke-linecap="round" stroke-linejoin="round"/>
<polyline points="25.0,686.0 110.0,621.0" fill="none" stroke="#cdc8c4" stroke-width="15.4" stroke-linecap="round" stroke-linejoin="round"/>
<polyline points="82.5,676.0 100.0,696.0" fill="none" stroke="#cdc8c4" stroke-width="10.4" stroke-linecap="round" stroke-linejoin="round"/>
<polyline points="-10.0,21.2 50.0,42.5 100.0,61.2 150.0,76.2 207.5,96.2" fill="none" stroke="#fff" stroke-width="19.0" stroke-linecap="round" stroke-linejoin="round"/>
<polyline points="92.0,8.8 93.0,21.2 100.0,31.2 92.5,50.0 86.2,56.2" fill="none" stroke="#fff" stroke-width="8.0" stroke-linecap="round" stroke-linejoin="round"/>
<polyline points="143.8,22.5 120.0,21.2 100.0,32.0" fill="none" stroke="#fff" stroke-width="8.0" stroke-linecap="round" stroke-linejoin="round"/>
<polyline points="82.5,61.2 33.8,178.8" fill="none" stroke="#fff" stroke-width="13.0" stroke-linecap="round" stroke-linejoin="round"/>
<polyline points="117.5,78.8 87.5,156.2" fill="none" stroke="#fff" stroke-width="7.0" stroke-linecap="round" stroke-linejoin="round"/>
<polyline points="171.2,164.2 203.8,173.2" fill="none" stroke="#fff" stroke-width="9.0" stroke-linecap="round" stroke-linejoin="round"/>
<polyline points="141.2,196.2 203.8,218.0" fill="none" stroke="#fff" stroke-width="8.5" stroke-linecap="round" stroke-linejoin="round"/>
<circle cx="139.2" cy="195.8" r="7.5" fill="#fff"/>
<polyline points="250.0,27.5 325.0,51.8 397.5,74.2" fill="none" stroke="#fff" stroke-width="18.5" stroke-linecap="round" stroke-linejoin="round"/>
<polyline points="347.5,68.8 322.5,132.5" fill="none" stroke="#fff" stroke-width="13.0" stroke-linecap="round" stroke-linejoin="round"/>
<polyline points="220.0,98.8 240.0,112.5 265.0,126.2 287.5,137.0 314.0,147.5" fill="none" stroke="#fff" stroke-width="16.0" stroke-linecap="round" stroke-linejoin="round"/>
<polyline points="314.0,147.5 464.0,201.2 564.0,232.5 667.8,261.8 739.0,280.5 839.0,306.2" fill="none" stroke="#fff" stroke-width="16.0" stroke-linecap="round" stroke-linejoin="round"/>
<polyline points="416.2,101.2 391.2,163.8" fill="none" stroke="#fff" stroke-width="13.0" stroke-linecap="round" stroke-linejoin="round"/>
<polyline points="373.8,127.5 361.2,155.0" fill="none" stroke="#fff" stroke-width="5.5" stroke-linecap="round" stroke-linejoin="round"/>
<polyline points="345.0,166.2 344.2,203.8" fill="none" stroke="#fff" stroke-width="7.0" stroke-linecap="round" stroke-linejoin="round"/>
<polyline points="435.0,208.8 437.5,216.2 446.2,221.2" fill="none" stroke="#fff" stroke-width="7.0" stroke-linecap="round" stroke-linejoin="round"/>
<polyline points="467.5,228.0 493.8,236.2 500.0,225.0" fill="none" stroke="#fff" stroke-width="6.5" stroke-linecap="round" stroke-linejoin="round"/>
<polyline points="226.2,246.2 260.0,244.5 272.5,251.2" fill="none" stroke="#fff" stroke-width="8.5" stroke-linecap="round" stroke-linejoin="round"/>
<polyline points="353.8,271.2 376.2,283.8" fill="none" stroke="#fff" stroke-width="8.5" stroke-linecap="round" stroke-linejoin="round"/>
<polyline points="355.0,271.2 275.0,396.0" fill="none" stroke="#fff" stroke-width="8.5" stroke-linecap="round" stroke-linejoin="round"/>
<polyline points="347.5,288.5 271.2,398.5 265.5,408.5" fill="none" stroke="#fff" stroke-width="8.5" stroke-linecap="butt" stroke-linejoin="round"/>
<polyline points="464.0,-7.5 489.0,21.2 539.0,50.0 589.0,71.2 639.0,78.0 739.0,63.8 899.0,50.8" fill="none" stroke="#fff" stroke-width="18.0" stroke-linecap="round" stroke-linejoin="round"/>
<polyline points="486.5,26.2 466.5,75.0 457.8,84.5 445.2,86.2" fill="none" stroke="#fff" stroke-width="9.0" stroke-linecap="round" stroke-linejoin="round"/>
<polyline points="489.0,10.0 494.0,-5.0" fill="none" stroke="#fff" stroke-width="7.0" stroke-linecap="round" stroke-linejoin="round"/>
<polyline points="635.2,70.0 659.0,28.8 671.5,25.0" fill="none" stroke="#fff" stroke-width="9.0" stroke-linecap="round" stroke-linejoin="round"/>
<polyline points="681.5,63.8 707.8,-2.5" fill="none" stroke="#fff" stroke-width="8.5" stroke-linecap="round" stroke-linejoin="round"/>
<polyline points="609.0,168.0 684.0,188.0 684.8,200.0 751.5,217.0" fill="none" stroke="#fff" stroke-width="8.5" stroke-linecap="round" stroke-linejoin="round"/>
<polyline points="609.0,168.0 599.0,207.5 616.5,246.2" fill="none" stroke="#fff" stroke-width="8.5" stroke-linecap="round" stroke-linejoin="round"/>
<polyline points="684.8,198.8 666.5,252.5" fill="none" stroke="#fff" stroke-width="9.0" stroke-linecap="round" stroke-linejoin="round"/>
<polyline points="801.5,193.8 781.0,295.0" fill="none" stroke="#fff" stroke-width="8.0" stroke-linecap="round" stroke-linejoin="round"/>
<polyline points="846.5,241.2 815.2,237.5 804.5,255.0 789.0,297.5" fill="none" stroke="#fff" stroke-width="8.5" stroke-linecap="round" stroke-linejoin="round"/>
<polyline points="744.0,267.0 774.0,275.0" fill="none" stroke="#fff" stroke-width="7.0" stroke-linecap="round" stroke-linejoin="round"/>
<polyline points="685.2,253.0 719.0,267.0 724.0,277.5" fill="none" stroke="#fff" stroke-width="7.5" stroke-linecap="round" stroke-linejoin="round"/>
<polyline points="735.2,240.0 727.0,277.5" fill="none" stroke="#fff" stroke-width="7.0" stroke-linecap="round" stroke-linejoin="round"/>
<polyline points="810.2,265.0 829.0,272.5" fill="none" stroke="#fff" stroke-width="7.0" stroke-linecap="round" stroke-linejoin="round"/>
<polyline points="860.2,188.0 899.0,186.2" fill="none" stroke="#fff" stroke-width="9.0" stroke-linecap="round" stroke-linejoin="round"/>
<polyline points="704.0,288.5 630.2,416.0" fill="none" stroke="#fff" stroke-width="8.5" stroke-linecap="round" stroke-linejoin="round"/>
<polyline points="750.2,298.5 715.2,359.8" fill="none" stroke="#fff" stroke-width="15.0" stroke-linecap="round" stroke-linejoin="round"/>
<circle cx="867.8" cy="323.5" r="34" fill="#fff"/>
<polyline points="867.8,323.5 899.0,281.0" fill="none" stroke="#fff" stroke-width="30.0" stroke-linecap="round" stroke-linejoin="round"/>
<polyline points="864.0,328.5 834.0,376.0 739.0,526.0 664.0,643.5 631.5,696.0" fill="none" stroke="#fff" stroke-width="26.0" stroke-linecap="round" stroke-linejoin="round"/>
<polyline points="225.0,396.0 268.8,428.5 357.5,483.5" fill="none" stroke="#fff" stroke-width="19.5" stroke-linecap="round" stroke-linejoin="round"/>
<polyline points="357.5,483.5 414.0,517.2 525.2,594.8 646.5,671.0" fill="none" stroke="#fff" stroke-width="19.5" stroke-linecap="round" stroke-linejoin="round"/>
<polygon points="231.7,367 270,399 245,402 223,388" fill="#fff"/>
<polyline points="-5.0,236.4 59.3,261.3 124.8,298.2 194.8,343.1" fill="none" stroke="#fff" stroke-width="15.5" stroke-linecap="round" stroke-linejoin="round"/>
<polyline points="104.2,258.8 192.3,306.9" fill="none" stroke="#fff" stroke-width="7.5" stroke-linecap="round" stroke-linejoin="round"/>
<polyline points="194.1,278.8 194.1,316.9 199.8,333.1" fill="none" stroke="#fff" stroke-width="7.5" stroke-linecap="round" stroke-linejoin="round"/>
<polyline points="-2.5,287.5 56.2,334.4 112.4,390.5 149.8,408.0 189.8,419.9" fill="none" stroke="#fff" stroke-width="7.0" stroke-linecap="round" stroke-linejoin="round"/>
<polyline points="724.0,578.5 789.0,618.5 899.0,679.8" fill="none" stroke="#fff" stroke-width="16.0" stroke-linecap="round" stroke-linejoin="round"/>
<polyline points="829.0,426.0 876.5,448.5" fill="none" stroke="#fff" stroke-width="9.0" stroke-linecap="round" stroke-linejoin="round"/>
<polyline points="789.0,486.0 834.0,506.0 895.0,538.5" fill="none" stroke="#fff" stroke-width="16.0" stroke-linecap="round" stroke-linejoin="round"/>
<polyline points="687.8,442.2 691.5,458.5 736.5,486.0" fill="none" stroke="#fff" stroke-width="9.0" stroke-linecap="round" stroke-linejoin="round"/>
<polyline points="626.5,484.8 709.0,533.5" fill="none" stroke="#fff" stroke-width="8.5" stroke-linecap="round" stroke-linejoin="round"/>
<polyline points="691.5,483.5 674.0,511.0" fill="none" stroke="#fff" stroke-width="8.5" stroke-linecap="round" stroke-linejoin="round"/>
<polyline points="615.2,443.5 531.5,571.0" fill="none" stroke="#fff" stroke-width="8.5" stroke-linecap="round" stroke-linejoin="round"/>
<polyline points="581.5,561.0 604.0,573.5 584.0,608.5" fill="none" stroke="#fff" stroke-width="8.5" stroke-linecap="round" stroke-linejoin="round"/>
<polyline points="649.0,511.0 617.8,569.8" fill="none" stroke="#fff" stroke-width="4.0" stroke-linecap="round" stroke-linejoin="round"/>
<polyline points="610.2,518.5 586.5,546.0" fill="none" stroke="#fff" stroke-width="7.0" stroke-linecap="round" stroke-linejoin="round"/>
<polyline points="427.8,423.5 454.0,436.0 431.5,476.0 401.5,476.0" fill="none" stroke="#fff" stroke-width="14.0" stroke-linecap="round" stroke-linejoin="round"/>
<polyline points="446.5,393.5 484.0,421.0 431.5,496.0" fill="none" stroke="#fff" stroke-width="3.5" stroke-linecap="round" stroke-linejoin="round"/>
<polyline points="469.0,477.2 449.0,516.0" fill="none" stroke="#fff" stroke-width="8.5" stroke-linecap="round" stroke-linejoin="round"/>
<polyline points="516.5,513.5 489.0,543.5" fill="none" stroke="#fff" stroke-width="8.5" stroke-linecap="round" stroke-linejoin="round"/>
<polyline points="396.5,523.5 371.5,548.5" fill="none" stroke="#fff" stroke-width="8.5" stroke-linecap="round" stroke-linejoin="round"/>
<polyline points="434.0,546.0 369.0,626.0" fill="none" stroke="#fff" stroke-width="8.5" stroke-linecap="round" stroke-linejoin="round"/>
<polyline points="494.0,583.5 436.5,673.5" fill="none" stroke="#fff" stroke-width="8.5" stroke-linecap="round" stroke-linejoin="round"/>
<polyline points="332.8,544.8 299.0,593.5" fill="none" stroke="#fff" stroke-width="8.5" stroke-linecap="round" stroke-linejoin="round"/>
<polyline points="401.5,526.0 346.5,601.0 331.5,592.2" fill="none" stroke="#fff" stroke-width="8.5" stroke-linecap="round" stroke-linejoin="round"/>
<polyline points="791.5,531.0 790.2,548.5" fill="none" stroke="#fff" stroke-width="9.0" stroke-linecap="round" stroke-linejoin="round"/>
<polyline points="811.5,531.0 811.5,558.5" fill="none" stroke="#fff" stroke-width="9.0" stroke-linecap="round" stroke-linejoin="round"/>
<polyline points="877.8,559.8 829.0,636.0 819.0,683.5" fill="none" stroke="#fff" stroke-width="8.5" stroke-linecap="round" stroke-linejoin="round"/>
<polyline points="724.0,596.0 744.0,598.5 771.5,618.5 769.0,633.5" fill="none" stroke="#fff" stroke-width="7.0" stroke-linecap="round" stroke-linejoin="round"/>
<polyline points="786.5,623.5 895.0,686.0" fill="none" stroke="#fff" stroke-width="3.0" stroke-linecap="round" stroke-linejoin="round"/>
<polyline points="217.5,568.5 260.0,568.5" fill="none" stroke="#fff" stroke-width="8.5" stroke-linecap="round" stroke-linejoin="round"/>
<polyline points="217.5,603.5 277.5,602.2" fill="none" stroke="#fff" stroke-width="8.5" stroke-linecap="round" stroke-linejoin="round"/>
<polyline points="216.2,623.5 232.5,623.5 240.0,632.2 295.0,632.2" fill="none" stroke="#fff" stroke-width="7.5" stroke-linecap="round" stroke-linejoin="round"/>
<polyline points="215.0,664.0 270.0,659.8" fill="none" stroke="#fff" stroke-width="8.5" stroke-linecap="round" stroke-linejoin="round"/>
<polyline points="226.2,563.5 227.5,529.8 250.0,529.0" fill="none" stroke="#fff" stroke-width="3.5" stroke-linecap="round" stroke-linejoin="round"/>
<polyline points="241.2,473.5 370.0,551.0" fill="none" stroke="#fff" stroke-width="7.0" stroke-linecap="round" stroke-linejoin="round"/>
<polyline points="-5.0,544.0 101.0,521.5" fill="none" stroke="#fff" stroke-width="9.0" stroke-linecap="round" stroke-linejoin="round"/>
<polyline points="101.0,532.2 83.8,536.0 80.0,557.2 48.8,567.2" fill="none" stroke="#fff" stroke-width="7.5" stroke-linecap="round" stroke-linejoin="round"/>
<polyline points="25.0,686.0 110.0,621.0" fill="none" stroke="#fff" stroke-width="13.0" stroke-linecap="round" stroke-linejoin="round"/>
<polyline points="82.5,676.0 100.0,696.0" fill="none" stroke="#fff" stroke-width="8.0" stroke-linecap="round" stroke-linejoin="round"/>
<polyline points="-20.0,367.0 30.0,407.0 77.4,444.5 99.9,471.9 111.1,500.6 114.6,525.6 118.6,566.2 123.3,605.0 126.0,625.0 140.0,655.0 160.0,692.0" fill="none" stroke="#7c8a10" stroke-width="27" stroke-linejoin="round"/><polyline points="-20.0,367.0 30.0,407.0 77.4,444.5 99.9,471.9 111.1,500.6 114.6,525.6 118.6,566.2 123.3,605.0 126.0,625.0 140.0,655.0 160.0,692.0" fill="none" stroke="#f7fabf" stroke-width="24.4" stroke-linejoin="round"/>
<polygon points="238.5,-2.0 220.5,50.0 206.5,82.0 200.5,107.0 201.0,125.0 200.7,250.0 199.5,332.0 198.5,334.5 188.5,352.0 184.8,364.0 186.5,380.0 187.5,425.0 186.2,461.0 180.3,553.0 175.0,636.0 170.0,661.0 165.0,684.0 211.0,684.0 216.2,636.0 218.7,561.0 223.7,461.0 223.5,425.0 222.3,390.0 226.0,387.0 230.0,378.0 232.3,364.0 231.0,349.0 226.0,339.0 226.4,250.0 228.0,155.0 229.5,107.0 235.5,82.0 249.0,50.0 267.5,-2.0" fill="#fcd6a4" stroke="#a87420" stroke-width="1.6" stroke-linejoin="round"/><polyline points="253.0,-2.0 234.8,50.0 221.0,82.0 215.0,107.0 214.5,140.0 213.6,250.0 212.8,335.5 214.8,341.8 210.4,358.0 207.4,371.0 206.2,383.5 204.9,407.5 204.8,443.0 202.0,507.0 196.8,598.5 193.1,648.5 188.0,684.0" fill="none" stroke="#b9a7c9" stroke-width="0.9" stroke-dasharray="3.5 3.5" opacity="0.8"/>
<circle cx="302.5" cy="309.5" r="3" fill="#ac39ac"/>
<circle cx="255.5" cy="340.5" r="3" fill="#ac39ac"/>
<circle cx="323.8" cy="360.5" r="3" fill="#c77400"/>
<circle cx="348.2" cy="369.8" r="3" fill="#c77400"/>
<circle cx="318.8" cy="384.8" r="3" fill="#c77400"/>
<circle cx="300.0" cy="403.5" r="3" fill="#c77400"/>
<circle cx="362.5" cy="416.8" r="3" fill="#c77400"/>
<circle cx="398.2" cy="454.8" r="3" fill="#c77400"/>
<circle cx="32.5" cy="456.0" r="3" fill="#c77400"/>
<circle cx="15.5" cy="489.2" r="3" fill="#c77400"/>
<circle cx="91.2" cy="599.8" r="3" fill="#c77400"/>
<circle cx="233.0" cy="666.0" r="3" fill="#c77400"/>
<circle cx="289.2" cy="658.5" r="3" fill="#c77400"/>
<circle cx="368.2" cy="395.5" r="3" fill="#ac39ac"/>
<circle cx="386.2" cy="412.2" r="3" fill="#ac39ac"/>
<circle cx="345.8" cy="424.8" r="3" fill="#ac39ac"/>
<circle cx="391.2" cy="436.5" r="3" fill="#ac39ac"/>
<circle cx="227.0" cy="657.2" r="3" fill="#ac39ac"/>
<circle cx="762.2" cy="257.5" r="3" fill="#ac39ac"/>
<circle cx="881.0" cy="252.0" r="3" fill="#c77400"/>
<circle cx="526.0" cy="660.2" r="3" fill="#c77400"/>
<circle cx="753.2" cy="613.5" r="3" fill="#c77400"/>
<circle cx="707.0" cy="652.8" r="3" fill="#c77400"/>
<circle cx="684.0" cy="662.2" r="3" fill="#c77400"/>
<circle cx="854.0" cy="679.8" r="3" fill="#c77400"/>
<line x1="541" y1="646" x2="625" y2="684" stroke="#aad3df" stroke-width="5" stroke-dasharray="4 3" opacity="0.7"/>
<text transform="translate(244.0,27.0) rotate(-64.0)" text-anchor="middle" font-size="16.5" font-style="normal" font-weight="400" fill="#333" stroke="none" stroke-width="0" paint-order="stroke" stroke-linejoin="round" dy="5.8" textLength="94.0" lengthAdjust="spacing">Peponi Road</text>
<text transform="translate(214.5,233.0) rotate(-88.5)" text-anchor="middle" font-size="16.5" font-style="normal" font-weight="400" fill="#333" stroke="none" stroke-width="0" paint-order="stroke" stroke-linejoin="round" dy="5.8" textLength="96.0" lengthAdjust="spacing">Peponi Road</text>
<text transform="translate(209.5,513.0) rotate(-87.0)" text-anchor="middle" font-size="16.5" font-style="normal" font-weight="400" fill="#333" stroke="none" stroke-width="0" paint-order="stroke" stroke-linejoin="round" dy="5.8" textLength="96.0" lengthAdjust="spacing">Peponi Road</text>
<text transform="translate(376.0,170.0) rotate(21.5)" text-anchor="middle" font-size="16.5" font-style="normal" font-weight="400" fill="#333" stroke="#fff" stroke-width="3" paint-order="stroke" stroke-linejoin="round" dy="5.8" textLength="190.0" lengthAdjust="spacing">General Mathenge Road</text>
<text transform="translate(590.2,77.5) rotate(17.0)" text-anchor="middle" font-size="16.5" font-style="normal" font-weight="400" fill="#333" stroke="#fff" stroke-width="3" paint-order="stroke" stroke-linejoin="round" dy="5.8" textLength="56.0" lengthAdjust="spacing">Eldama</text>
<text transform="translate(670.5,76.2) rotate(-10.2)" text-anchor="middle" font-size="16.5" font-style="normal" font-weight="400" fill="#333" stroke="#fff" stroke-width="3" paint-order="stroke" stroke-linejoin="round" dy="5.8" textLength="93.0" lengthAdjust="spacing">Ravine Road</text>
<text transform="translate(313.7,456.0) rotate(33.7)" text-anchor="middle" font-size="16.5" font-style="normal" font-weight="400" fill="#333" stroke="#fff" stroke-width="3" paint-order="stroke" stroke-linejoin="round" dy="5.8" textLength="108.0" lengthAdjust="spacing">Mwanzi Road</text>
<text transform="translate(526.0,595.5) rotate(33.5)" text-anchor="middle" font-size="16.5" font-style="normal" font-weight="400" fill="#333" stroke="#fff" stroke-width="3" paint-order="stroke" stroke-linejoin="round" dy="5.8" textLength="108.0" lengthAdjust="spacing">Mwanzi Road</text>
<text transform="translate(764.0,509.7) rotate(-56.6)" text-anchor="middle" font-size="16.5" font-style="normal" font-weight="400" fill="#333" stroke="#fff" stroke-width="3" paint-order="stroke" stroke-linejoin="round" dy="5.8" textLength="158.0" lengthAdjust="spacing">Ring Road Parklands</text>
<text transform="translate(853.5,655.0) rotate(31.6)" text-anchor="middle" font-size="16.5" font-style="normal" font-weight="400" fill="#333" stroke="#fff" stroke-width="3" paint-order="stroke" stroke-linejoin="round" dy="5.8" textLength="104.0" lengthAdjust="spacing">Jalaram Road</text>
<text transform="translate(74.2,650.2) rotate(-39.0)" text-anchor="middle" font-size="16.5" font-style="normal" font-weight="400" fill="#333" stroke="#fff" stroke-width="3" paint-order="stroke" stroke-linejoin="round" dy="5.8" textLength="100.0" lengthAdjust="spacing">Karuna Road</text>
<text transform="translate(659.5,215.0) rotate(0.0)" text-anchor="middle" font-size="16.5" font-style="normal" font-weight="400" fill="#666" stroke="#fff" stroke-width="2.5" paint-order="stroke" stroke-linejoin="round" dy="5.8" textLength="108.0" lengthAdjust="spacing">The Courtyard</text>
<text transform="translate(124.2,388.0) rotate(0.0)" text-anchor="middle" font-size="18" font-style="italic" font-weight="400" fill="#2f8f47" stroke="#d8fbdb" stroke-width="2" paint-order="stroke" stroke-linejoin="round" dy="6.3" textLength="82.0" lengthAdjust="spacing">Westlands</text>
<text transform="translate(124.2,409.6) rotate(0.0)" text-anchor="middle" font-size="18" font-style="italic" font-weight="400" fill="#2f8f47" stroke="#d8fbdb" stroke-width="2" paint-order="stroke" stroke-linejoin="round" dy="6.3" textLength="75.0" lengthAdjust="spacing">Botanical</text>
<text transform="translate(124.2,431.2) rotate(0.0)" text-anchor="middle" font-size="18" font-style="italic" font-weight="400" fill="#2f8f47" stroke="#d8fbdb" stroke-width="2" paint-order="stroke" stroke-linejoin="round" dy="6.3" textLength="58.0" lengthAdjust="spacing">Garden</text>
<text transform="translate(416.7,361.0) rotate(0.0)" text-anchor="middle" font-size="15.5" font-style="normal" font-weight="400" fill="#4a8af4" stroke="#fff" stroke-width="2.5" paint-order="stroke" stroke-linejoin="round" dy="5.4" textLength="66.0" lengthAdjust="spacing">Westgate</text>
<text transform="translate(416.7,378.8) rotate(0.0)" text-anchor="middle" font-size="15.5" font-style="normal" font-weight="400" fill="#4a8af4" stroke="#fff" stroke-width="2.5" paint-order="stroke" stroke-linejoin="round" dy="5.4" textLength="67.0" lengthAdjust="spacing">Shopping</text>
<text transform="translate(416.7,396.6) rotate(0.0)" text-anchor="middle" font-size="15.5" font-style="normal" font-weight="400" fill="#4a8af4" stroke="#fff" stroke-width="2.5" paint-order="stroke" stroke-linejoin="round" dy="5.4" textLength="47.0" lengthAdjust="spacing">Centre</text>
<text transform="translate(310.0,506.7) rotate(0.0)" text-anchor="middle" font-size="15.5" font-style="normal" font-weight="400" fill="#4a8af4" stroke="#fff" stroke-width="2.5" paint-order="stroke" stroke-linejoin="round" dy="5.4" textLength="66.0" lengthAdjust="spacing">Westgate</text>
<text transform="translate(310.0,523.7) rotate(0.0)" text-anchor="middle" font-size="15.5" font-style="normal" font-weight="400" fill="#4a8af4" stroke="#fff" stroke-width="2.5" paint-order="stroke" stroke-linejoin="round" dy="5.4" textLength="60.0" lengthAdjust="spacing">Car Park</text>
<text transform="translate(417.5,339.7) rotate(0.0)" text-anchor="middle" font-size="26" font-style="normal" font-weight="400" fill="#0092da" stroke="#0092da" stroke-width="0.5" paint-order="stroke" stroke-linejoin="round" dy="9.1">P</text>
<text transform="translate(408.2,412.2) rotate(0.0)" text-anchor="middle" font-size="26" font-style="normal" font-weight="400" fill="#0092da" stroke="#0092da" stroke-width="0.5" paint-order="stroke" stroke-linejoin="round" dy="9.1">P</text>
<text transform="translate(309.2,486.0) rotate(0.0)" text-anchor="middle" font-size="26" font-style="normal" font-weight="400" fill="#0092da" stroke="#0092da" stroke-width="0.5" paint-order="stroke" stroke-linejoin="round" dy="9.1">P</text>
<text transform="translate(499.0,485.5) rotate(0.0)" text-anchor="middle" font-size="15.5" font-style="normal" font-weight="400" fill="#734a08" stroke="#fff" stroke-width="2.5" paint-order="stroke" stroke-linejoin="round" dy="5.4" textLength="52.0" lengthAdjust="spacing">Bank of</text>
<text transform="translate(499.0,503.0) rotate(0.0)" text-anchor="middle" font-size="15.5" font-style="normal" font-weight="400" fill="#734a08" stroke="#fff" stroke-width="2.5" paint-order="stroke" stroke-linejoin="round" dy="5.4" textLength="50.0" lengthAdjust="spacing">Baroda</text>
<text transform="translate(571.5,454.0) rotate(0.0)" text-anchor="middle" font-size="16.5" font-style="normal" font-weight="400" fill="#555" stroke="#fff" stroke-width="2.5" paint-order="stroke" stroke-linejoin="round" dy="5.8" textLength="77.0" lengthAdjust="spacing">Landmark</text>
<text transform="translate(571.5,473.5) rotate(0.0)" text-anchor="middle" font-size="16.5" font-style="normal" font-weight="400" fill="#555" stroke="#fff" stroke-width="2.5" paint-order="stroke" stroke-linejoin="round" dy="5.8" textLength="46.0" lengthAdjust="spacing">Suites</text>
<text transform="translate(576.5,512.2) rotate(0.0)" text-anchor="middle" font-size="16.5" font-style="normal" font-weight="400" fill="#555" stroke="#fff" stroke-width="2.5" paint-order="stroke" stroke-linejoin="round" dy="5.8" textLength="83.0" lengthAdjust="spacing">Progessive</text>
<text transform="translate(576.5,532.2) rotate(0.0)" text-anchor="middle" font-size="16.5" font-style="normal" font-weight="400" fill="#555" stroke="#fff" stroke-width="2.5" paint-order="stroke" stroke-linejoin="round" dy="5.8" textLength="34.0" lengthAdjust="spacing">Park</text>
<text transform="translate(576.5,552.2) rotate(0.0)" text-anchor="middle" font-size="16.5" font-style="normal" font-weight="400" fill="#555" stroke="#fff" stroke-width="2.5" paint-order="stroke" stroke-linejoin="round" dy="5.8" textLength="41.0" lengthAdjust="spacing">Hotel</text>
<text transform="translate(629.0,597.2) rotate(0.0)" text-anchor="middle" font-size="16.5" font-style="normal" font-weight="400" fill="#555" stroke="#fff" stroke-width="2.5" paint-order="stroke" stroke-linejoin="round" dy="5.8" textLength="33.0" lengthAdjust="spacing">Kam</text>
<text transform="translate(629.0,617.2) rotate(0.0)" text-anchor="middle" font-size="16.5" font-style="normal" font-weight="400" fill="#555" stroke="#fff" stroke-width="2.5" paint-order="stroke" stroke-linejoin="round" dy="5.8" textLength="40.0" lengthAdjust="spacing">Place</text>
<text transform="translate(702.2,616.5) rotate(0.0)" text-anchor="middle" font-size="15.5" font-style="normal" font-weight="400" fill="#8d2a6e" stroke="#fff" stroke-width="2.5" paint-order="stroke" stroke-linejoin="round" dy="5.4" textLength="52.0" lengthAdjust="spacing">Freeing</text>
<text transform="translate(702.2,634.0) rotate(0.0)" text-anchor="middle" font-size="15.5" font-style="normal" font-weight="400" fill="#8d2a6e" stroke="#fff" stroke-width="2.5" paint-order="stroke" stroke-linejoin="round" dy="5.4" textLength="57.0" lengthAdjust="spacing">in Africa</text>
<text transform="translate(824.0,504.7) rotate(0.0)" text-anchor="start" font-size="15.5" font-style="normal" font-weight="400" fill="#3b3b7a" stroke="#fff" stroke-width="2.5" paint-order="stroke" stroke-linejoin="round" dy="5.4">Shree Jalaram</text>
<text transform="translate(844.0,522.2) rotate(0.0)" text-anchor="start" font-size="15.5" font-style="normal" font-weight="400" fill="#3b3b7a" stroke="#fff" stroke-width="2.5" paint-order="stroke" stroke-linejoin="round" dy="5.4">Satsang</text>
<text transform="translate(846.5,539.7) rotate(0.0)" text-anchor="start" font-size="15.5" font-style="normal" font-weight="400" fill="#3b3b7a" stroke="#fff" stroke-width="2.5" paint-order="stroke" stroke-linejoin="round" dy="5.4">Mandal</text>
<text transform="translate(21.5,525.0) rotate(0.0)" text-anchor="end" font-size="15.5" font-style="normal" font-weight="400" fill="#0092da" stroke="#fff" stroke-width="2.5" paint-order="stroke" stroke-linejoin="round" dy="5.4">Hotel</text>
<text transform="translate(15.5,646.0) rotate(0.0)" text-anchor="end" font-size="15.5" font-style="normal" font-weight="400" fill="#0092da" stroke="#fff" stroke-width="2.5" paint-order="stroke" stroke-linejoin="round" dy="5.4">ria</text>
<g><rect x="489.0" y="459.0" width="20.7" height="15.0" fill="#734a08"/><ellipse cx="499.4" cy="465.4" rx="7.5" ry="4.5" fill="#f2efe9"/><ellipse cx="499.4" cy="465.4" rx="3.5" ry="2.2" fill="#734a08"/><rect x="489.0" y="471.3" width="20.7" height="1.2" fill="#d9c9a8"/></g>
<g><rect x="240.5" y="491.0" width="20.2" height="14.5" fill="#734a08"/><ellipse cx="250.6" cy="497.2" rx="7.3" ry="4.3" fill="#f2efe9"/><ellipse cx="250.6" cy="497.2" rx="3.4" ry="2.2" fill="#734a08"/><rect x="240.5" y="502.9" width="20.2" height="1.2" fill="#d9c9a8"/></g>
<g><rect x="763.5" y="538.5" width="20.5" height="15.0" fill="#734a08"/><ellipse cx="773.8" cy="545.0" rx="7.4" ry="4.5" fill="#f2efe9"/><ellipse cx="773.8" cy="545.0" rx="3.5" ry="2.2" fill="#734a08"/><rect x="763.5" y="550.8" width="20.5" height="1.2" fill="#d9c9a8"/></g>
<g fill="#734a08"><rect x="328.7" y="381" width="20.8" height="19.5"/></g><g fill="#d9cec7"><rect x="333.5" y="383.2" width="11.2" height="6.4"/><rect x="333.5" y="391.8" width="11.2" height="6.4"/><rect x="330.2" y="382.3" width="1.6" height="1.8"/><rect x="330.2" y="385.8" width="1.6" height="1.8"/><rect x="330.2" y="389.3" width="1.6" height="1.8"/><rect x="330.2" y="392.8" width="1.6" height="1.8"/><rect x="330.2" y="396.3" width="1.6" height="1.8"/><rect x="346.4" y="382.3" width="1.6" height="1.8"/><rect x="346.4" y="385.8" width="1.6" height="1.8"/><rect x="346.4" y="389.3" width="1.6" height="1.8"/><rect x="346.4" y="392.8" width="1.6" height="1.8"/><rect x="346.4" y="396.3" width="1.6" height="1.8"/></g>
<g transform="translate(357.5,358.5)" stroke="#ac39ac" fill="none" stroke-width="1.6"><path d="M0,4 H15 L19.5,0.5"/><path d="M1,4 L3,11.5 H14 L15.5,4"/><path d="M4.5,4V11.5M8,4V11.5M11.5,4V11.5M2,7.7H15"/><circle cx="4.5" cy="15" r="1.3" fill="#ac39ac"/><circle cx="12.5" cy="15" r="1.3" fill="#ac39ac"/></g>
<circle cx="853.2" cy="591" r="10.5" fill="#bf0000"/><path d="M853.2,585V597M847.2,591H859.2" stroke="#fff" stroke-width="3"/>
<g stroke="#0092da" stroke-width="1.6" fill="none"><path d="M59.5,574.5V586.5M59.5,583.5H79.5M79.5,578V586.5"/><circle cx="63.5" cy="579.5" r="1.5" fill="#0092da"/><path d="M67,581.2H76" stroke-width="2.4"/></g>
<text x="871.5" y="487" text-anchor="middle" font-size="22" font-weight="700" fill="#111">3&#x254;</text><path d="M866,469 q5,-3 9,0 M877,468.5 l1.5,-2" stroke="#111" stroke-width="1.4" fill="none"/>
<rect x="167" y="566.5" width="49.2" height="28.8" rx="3.5" fill="#f6e4cc" stroke="#c9a66b" stroke-width="1.2"/>
<text transform="translate(191.6,581.0) rotate(0.0)" text-anchor="middle" font-size="18" font-style="normal" font-weight="400" fill="#5a4a30" stroke="none" stroke-width="0" paint-order="stroke" stroke-linejoin="round" dy="6.3" textLength="38.5" lengthAdjust="spacingAndGlyphs">C562</text>
<g transform="translate(193.0,548.5) rotate(-90.0)" stroke="#3a3a3a" stroke-width="1.3" fill="#3a3a3a"><line x1="-7.0" y1="0" x2="5.0" y2="0"/><polygon points="8.0,0 3.0,-2.6 3.0,2.6" stroke="none"/></g>
<g transform="translate(204.5,604.7) rotate(90.0)" stroke="#3a3a3a" stroke-width="1.3" fill="#3a3a3a"><line x1="-7.0" y1="0" x2="5.0" y2="0"/><polygon points="8.0,0 3.0,-2.6 3.0,2.6" stroke="none"/></g>
<g transform="translate(257.5,419.7) rotate(213.7)" stroke="#3a3a3a" stroke-width="1.3" fill="#3a3a3a"><line x1="-7.0" y1="0" x2="5.0" y2="0"/><polygon points="8.0,0 3.0,-2.6 3.0,2.6" stroke="none"/></g>
<g transform="translate(320.0,443.0) rotate(33.7)" stroke="#3a3a3a" stroke-width="1.3" fill="#3a3a3a"><line x1="-7.0" y1="0" x2="5.0" y2="0"/><polygon points="8.0,0 3.0,-2.6 3.0,2.6" stroke="none"/></g>
<g transform="translate(526.0,577.2) rotate(33.7)" stroke="#3a3a3a" stroke-width="1.3" fill="#3a3a3a"><line x1="-7.0" y1="0" x2="5.0" y2="0"/><polygon points="8.0,0 3.0,-2.6 3.0,2.6" stroke="none"/></g>
<g transform="translate(585.7,632.7) rotate(213.7)" stroke="#3a3a3a" stroke-width="1.3" fill="#3a3a3a"><line x1="-7.0" y1="0" x2="5.0" y2="0"/><polygon points="8.0,0 3.0,-2.6 3.0,2.6" stroke="none"/></g>
<g transform="translate(810.2,428.5) rotate(123.0)" stroke="#3a3a3a" stroke-width="1.3" fill="#3a3a3a"><line x1="-6.5" y1="0" x2="4.5" y2="0"/><polygon points="7.5,0 2.5,-2.6 2.5,2.6" stroke="none"/></g>
<g transform="translate(717.0,543.5) rotate(-57.0)" stroke="#3a3a3a" stroke-width="1.3" fill="#3a3a3a"><line x1="-6.5" y1="0" x2="4.5" y2="0"/><polygon points="7.5,0 2.5,-2.6 2.5,2.6" stroke="none"/></g>
<g transform="translate(850.2,311.2) rotate(-50.0)" stroke="#3a3a3a" stroke-width="1.3" fill="#3a3a3a"><line x1="-6.5" y1="0" x2="4.5" y2="0"/><polygon points="7.5,0 2.5,-2.6 2.5,2.6" stroke="none"/></g>
<circle cx="866" cy="326.7" r="8.7" fill="#f2efe9" stroke="#bdb7b2" stroke-width="1.2"/>
<circle cx="414.7" cy="512.2" r="2" fill="#f2efe9" stroke="#bdb7b2" stroke-width="0.8"/>
<path d="M0,131.3H895M0,514.8H895" stroke="#fff" stroke-opacity="0.6" stroke-width="0.8"/>
<rect x="15.4" y="15.2" width="50.3" height="95.5" rx="6.5" fill="#000" fill-opacity="0.2"/>
<path d="M18,22 a4,4 0 0 1 4,-4 h37 a4,4 0 0 1 4,4 v41 h-45z" fill="#fff"/><path d="M18,63.6 h45 v40.4 a4,4 0 0 1 -4,4 h-37 a4,4 0 0 1 -4,-4z" fill="#fff"/><rect x="18" y="62.3" width="45" height="1.3" fill="#ccc"/>
<path d="M32.3,41.5H50M41.15,32.6V50.4" stroke="#000" stroke-width="3.8"/><path d="M32.3,86.5H50" stroke="#000" stroke-width="3.8"/>
<rect x="15.4" y="126.2" width="50.3" height="50.6" rx="6.5" fill="#000" fill-opacity="0.2"/><rect x="18" y="128.8" width="45" height="45.6" rx="4" fill="#fff"/>
<g transform="translate(27,137.2) scale(1.125)" fill="none" stroke="#2b3a55" stroke-width="2" stroke-linecap="round" stroke-linejoin="round"><path d="M15 21v-8a1 1 0 0 0-1-1h-4a1 1 0 0 0-1 1v8"/><path d="M3 10a2 2 0 0 1 .709-1.528l7-5.999a2 2 0 0 1 2.582 0l7 5.999A2 2 0 0 1 21 10v9a2 2 0 0 1-2 2H5a2 2 0 0 1-2-2z"/></g>
<circle cx="383.7" cy="247.7" r="25.5" fill="#000" fill-opacity="0.07"/><circle cx="383.7" cy="246.2" r="24" fill="#fff"/>
<g transform="translate(365.7,228.2) scale(1.5)" fill="none" stroke="#4338ca" stroke-width="2" stroke-linecap="round" stroke-linejoin="round"><rect width="20" height="8" x="2" y="14" rx="2"/><path d="M6.01 18H6"/><path d="M10.01 18H10"/><path d="M15 10v4"/><path d="M17.84 7.17a4 4 0 0 0-5.66 0"/><path d="M20.66 4.34a8 8 0 0 0-11.31 0"/></g>
<circle cx="510.2" cy="610.5" r="25.5" fill="#000" fill-opacity="0.07"/><circle cx="510.2" cy="609.0" r="24" fill="#fff"/>
<g transform="translate(492.2,591.0) scale(1.5)" fill="none" stroke="#dd82f0" stroke-width="2" stroke-linecap="round" stroke-linejoin="round"><rect width="20" height="8" x="2" y="14" rx="2"/><path d="M6.01 18H6"/><path d="M10.01 18H10"/><path d="M15 10v4"/><path d="M17.84 7.17a4 4 0 0 0-5.66 0"/><path d="M20.66 4.34a8 8 0 0 0-11.31 0"/></g>
</svg>
</div></body></html>
